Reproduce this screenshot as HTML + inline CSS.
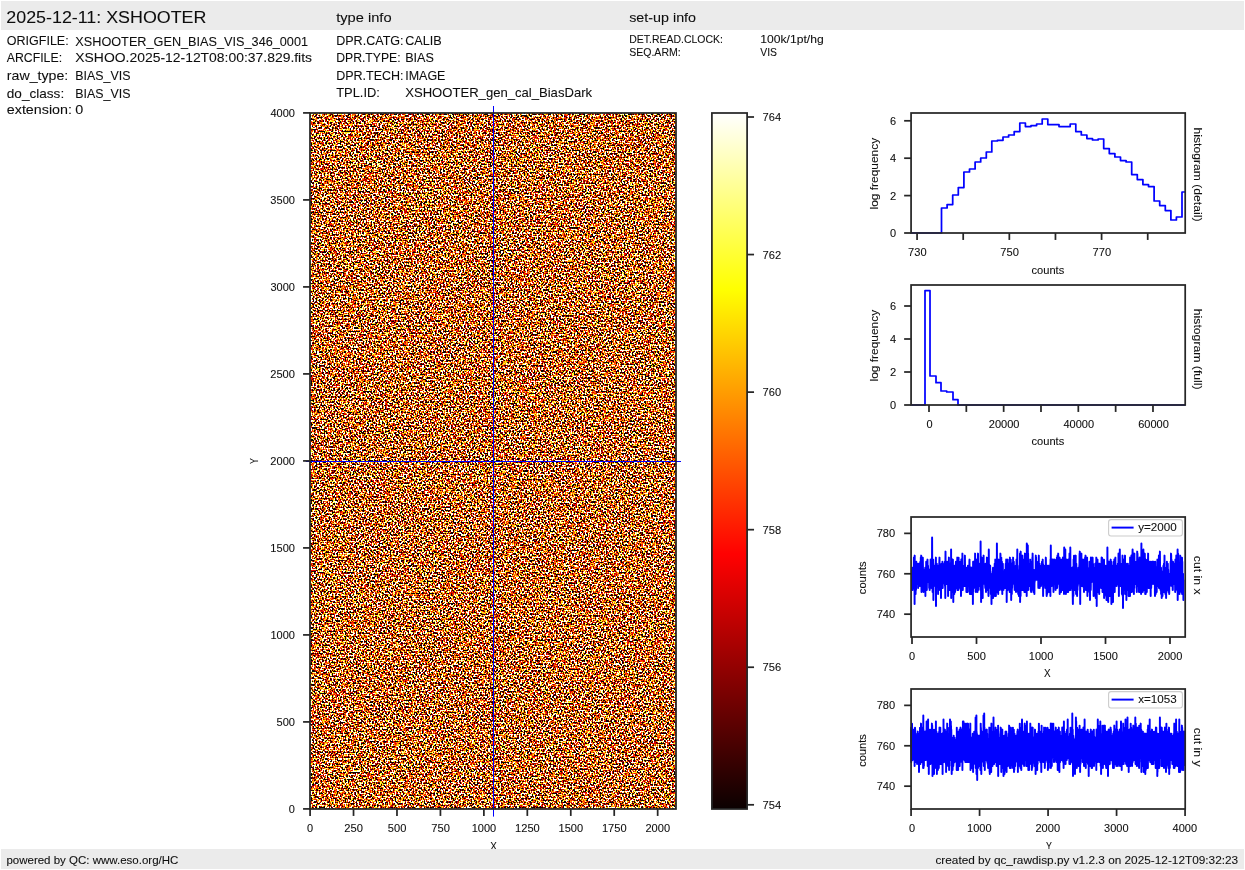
<!DOCTYPE html>
<html><head><meta charset="utf-8"><title>XSHOOTER BIAS_VIS</title>
<style>
html,body{margin:0;padding:0;background:#fff;}
body{width:1245px;height:870px;overflow:hidden;}
svg{display:block;font-family:"Liberation Sans",sans-serif;will-change:transform;opacity:0.9999;}
text{white-space:pre;stroke:#1a1a1a;stroke-width:0.08px;}
</style></head><body>
<svg width="1245" height="870" viewBox="0 0 1245 870">
<defs>
<linearGradient id="hot" x1="0" y1="1" x2="0" y2="0">
<stop offset="0" stop-color="rgb(11,0,0)"/><stop offset="0.365079" stop-color="rgb(255,0,0)"/><stop offset="0.746032" stop-color="rgb(255,255,0)"/><stop offset="1" stop-color="rgb(255,255,255)"/>
</linearGradient>
<filter id="noise" x="0" y="0" width="100%" height="100%" filterUnits="objectBoundingBox" color-interpolation-filters="sRGB">
<feTurbulence type="fractalNoise" baseFrequency="0.62 0.58" numOctaves="1" seed="7"/>
<feColorMatrix type="matrix" values="1 0 0 0 0  1 0 0 0 0  1 0 0 0 0  0 0 0 0 1"/>
<feComponentTransfer>
<feFuncR type="discrete" tableValues="0.042 0.042 0.042 0.042 0.042 0.042 0.042 0.042 0.042 0.042 0.042 0.042 0.042 0.042 0.042 0.042 0.042 0.042 0.042 0.042 0.042 0.042 0.042 0.042 0.042 0.042 0.042 0.042 0.042 0.042 0.042 0.042 0.042 0.042 0.042 0.042 0.042 0.042 0.042 0.042 0.042 0.042 0.042 0.042 0.042 0.042 0.042 0.042 0.042 0.042 0.042 0.042 0.042 0.042 0.042 0.042 0.042 0.042 0.042 0.042 0.042 0.042 0.042 0.042 0.042 0.042 0.042 0.042 0.042 0.042 0.042 0.042 0.042 0.042 0.042 0.042 0.042 0.042 0.042 0.042 0.042 0.042 0.042 0.042 0.042 0.042 0.042 0.042 0.042 0.042 0.042 0.042 0.042 0.042 0.042 0.042 0.042 0.042 0.057 0.057 0.057 0.057 0.057 0.057 0.317 0.317 0.317 0.317 0.317 0.317 0.576 0.576 0.576 0.576 0.576 0.576 0.835 0.835 0.835 0.835 0.835 0.835 1 1 1 1 1 1 1 1 1 1 1 1 1 1 1 1 1 1 1 1 1 1 1 1 1 1 1 1 1 1 1 1 1 1 1 1 1 1 1 1 1 1 1 1 1 1 1 1 1 1 1 1 1 1 1 1 1 1 1 1 1 1 1 1 1 1 1 1 1 1 1 1 1 1 1 1 1 1 1 1 1 1 1 1 1 1 1 1 1 1 1 1 1 1 1 1 1 1 1 1 1 1 1 1 1 1 1 1 1 1 1 1 1 1 1 1 1 1 1 1 1 1 1 1 1 1 1 1 1 1 1 1 1 1"/>
<feFuncG type="discrete" tableValues="0 0 0 0 0 0 0 0 0 0 0 0 0 0 0 0 0 0 0 0 0 0 0 0 0 0 0 0 0 0 0 0 0 0 0 0 0 0 0 0 0 0 0 0 0 0 0 0 0 0 0 0 0 0 0 0 0 0 0 0 0 0 0 0 0 0 0 0 0 0 0 0 0 0 0 0 0 0 0 0 0 0 0 0 0 0 0 0 0 0 0 0 0 0 0 0 0 0 0 0 0 0 0 0 0 0 0 0 0 0 0 0 0 0 0 0 0 0 0 0 0 0 0.095 0.095 0.095 0.095 0.095 0.354 0.354 0.354 0.354 0.354 0.614 0.614 0.614 0.614 0.614 0.873 0.873 0.873 0.873 0.873 1 1 1 1 1 1 1 1 1 1 1 1 1 1 1 1 1 1 1 1 1 1 1 1 1 1 1 1 1 1 1 1 1 1 1 1 1 1 1 1 1 1 1 1 1 1 1 1 1 1 1 1 1 1 1 1 1 1 1 1 1 1 1 1 1 1 1 1 1 1 1 1 1 1 1 1 1 1 1 1 1 1 1 1 1 1 1 1 1 1 1 1 1 1 1 1 1 1 1 1 1 1 1 1 1 1 1 1 1 1 1 1 1 1"/>
<feFuncB type="discrete" tableValues="0 0 0 0 0 0 0 0 0 0 0 0 0 0 0 0 0 0 0 0 0 0 0 0 0 0 0 0 0 0 0 0 0 0 0 0 0 0 0 0 0 0 0 0 0 0 0 0 0 0 0 0 0 0 0 0 0 0 0 0 0 0 0 0 0 0 0 0 0 0 0 0 0 0 0 0 0 0 0 0 0 0 0 0 0 0 0 0 0 0 0 0 0 0 0 0 0 0 0 0 0 0 0 0 0 0 0 0 0 0 0 0 0 0 0 0 0 0 0 0 0 0 0 0 0 0 0 0 0 0 0 0 0 0 0 0 0 0 0 0 0 0 0.198 0.198 0.198 0.198 0.588 0.588 0.588 0.588 0.588 0.588 0.977 0.977 0.977 0.977 0.977 1 1 1 1 1 1 1 1 1 1 1 1 1 1 1 1 1 1 1 1 1 1 1 1 1 1 1 1 1 1 1 1 1 1 1 1 1 1 1 1 1 1 1 1 1 1 1 1 1 1 1 1 1 1 1 1 1 1 1 1 1 1 1 1 1 1 1 1 1 1 1 1 1 1 1 1 1 1 1 1 1 1 1 1 1 1 1 1 1 1 1 1 1 1 1 1 1 1 1"/>
</feComponentTransfer>
</filter>
</defs>
<rect x="0" y="0" width="1245" height="870" fill="#fff"/>
<rect x="1" y="1" width="1243" height="29" fill="#ebebeb"/>
<text x="6.30" y="23.00" font-size="17.33" textLength="200.12" lengthAdjust="spacingAndGlyphs" fill="#0d0d0d">2025-12-11: XSHOOTER</text>
<text x="336.20" y="22.40" font-size="13.00" textLength="55.38" lengthAdjust="spacingAndGlyphs" fill="#0d0d0d">type info</text>
<text x="629.20" y="22.40" font-size="13.00" textLength="66.88" lengthAdjust="spacingAndGlyphs" fill="#0d0d0d">set-up info</text>
<text x="6.80" y="44.60" font-size="13.00" textLength="61.88" lengthAdjust="spacingAndGlyphs" fill="#0d0d0d">ORIGFILE:</text>
<text x="75.30" y="46.00" font-size="13.00" textLength="232.75" lengthAdjust="spacingAndGlyphs" fill="#0d0d0d">XSHOOTER_GEN_BIAS_VIS_346_0001</text>
<text x="6.80" y="61.60" font-size="13.00" textLength="55.25" lengthAdjust="spacingAndGlyphs" fill="#0d0d0d">ARCFILE:</text>
<text x="75.30" y="61.60" font-size="13.00" textLength="236.75" lengthAdjust="spacingAndGlyphs" fill="#0d0d0d">XSHOO.2025-12-12T08:00:37.829.fits</text>
<text x="6.80" y="79.60" font-size="13.00" textLength="61.50" lengthAdjust="spacingAndGlyphs" fill="#0d0d0d">raw_type:</text>
<text x="75.30" y="80.40" font-size="13.00" textLength="55.12" lengthAdjust="spacingAndGlyphs" fill="#0d0d0d">BIAS_VIS</text>
<text x="6.80" y="97.60" font-size="13.00" textLength="57.38" lengthAdjust="spacingAndGlyphs" fill="#0d0d0d">do_class:</text>
<text x="75.30" y="97.60" font-size="13.00" textLength="55.12" lengthAdjust="spacingAndGlyphs" fill="#0d0d0d">BIAS_VIS</text>
<text x="6.80" y="113.60" font-size="13.00" textLength="65.12" lengthAdjust="spacingAndGlyphs" fill="#0d0d0d">extension:</text>
<text x="75.30" y="113.60" font-size="13.00" textLength="8.00" lengthAdjust="spacingAndGlyphs" fill="#0d0d0d">0</text>
<text x="336.20" y="44.60" font-size="13.00" textLength="67.38" lengthAdjust="spacingAndGlyphs" fill="#0d0d0d">DPR.CATG:</text>
<text x="405.20" y="44.60" font-size="13.00" textLength="36.50" lengthAdjust="spacingAndGlyphs" fill="#0d0d0d">CALIB</text>
<text x="336.20" y="61.60" font-size="13.00" textLength="64.38" lengthAdjust="spacingAndGlyphs" fill="#0d0d0d">DPR.TYPE:</text>
<text x="405.20" y="61.60" font-size="13.00" textLength="28.75" lengthAdjust="spacingAndGlyphs" fill="#0d0d0d">BIAS</text>
<text x="336.20" y="79.60" font-size="13.00" textLength="67.38" lengthAdjust="spacingAndGlyphs" fill="#0d0d0d">DPR.TECH:</text>
<text x="405.20" y="79.60" font-size="13.00" textLength="40.25" lengthAdjust="spacingAndGlyphs" fill="#0d0d0d">IMAGE</text>
<text x="336.20" y="97.20" font-size="13.00" textLength="43.75" lengthAdjust="spacingAndGlyphs" fill="#0d0d0d">TPL.ID:</text>
<text x="405.20" y="97.20" font-size="13.00" textLength="186.88" lengthAdjust="spacingAndGlyphs" fill="#0d0d0d">XSHOOTER_gen_cal_BiasDark</text>
<text x="629.20" y="43.00" font-size="10.83" textLength="93.75" lengthAdjust="spacingAndGlyphs" fill="#0d0d0d">DET.READ.CLOCK:</text>
<text x="629.20" y="56.00" font-size="10.83" textLength="51.50" lengthAdjust="spacingAndGlyphs" fill="#0d0d0d">SEQ.ARM:</text>
<text x="760.30" y="43.00" font-size="10.83" textLength="63.38" lengthAdjust="spacingAndGlyphs" fill="#0d0d0d">100k/1pt/hg</text>
<text x="760.30" y="56.00" font-size="10.83" textLength="16.75" lengthAdjust="spacingAndGlyphs" fill="#0d0d0d">VIS</text>
<rect x="310.0" y="113.0" width="366.0" height="696.0" fill="#bc713b"/>
<rect x="310.0" y="113.0" width="366.0" height="696.0" filter="url(#noise)"/>
<line x1="493.50" y1="106.00" x2="493.50" y2="816.60" stroke="#0000ff" stroke-width="1.00"/>
<line x1="305.80" y1="461.50" x2="681.00" y2="461.50" stroke="#0000ff" stroke-width="1.00"/>
<line x1="310.09" y1="809.00" x2="310.09" y2="815.94" stroke="#262626" stroke-width="1.74"/>
<text x="307.12" y="832.00" font-size="10.11" textLength="6.12" lengthAdjust="spacingAndGlyphs" fill="#0d0d0d">0</text>
<line x1="353.53" y1="809.00" x2="353.53" y2="815.94" stroke="#262626" stroke-width="1.74"/>
<text x="344.32" y="832.00" font-size="10.11" textLength="18.62" lengthAdjust="spacingAndGlyphs" fill="#0d0d0d">250</text>
<line x1="396.98" y1="809.00" x2="396.98" y2="815.94" stroke="#262626" stroke-width="1.74"/>
<text x="387.83" y="832.00" font-size="10.11" textLength="18.50" lengthAdjust="spacingAndGlyphs" fill="#0d0d0d">500</text>
<line x1="440.43" y1="809.00" x2="440.43" y2="815.94" stroke="#262626" stroke-width="1.74"/>
<text x="431.22" y="832.00" font-size="10.11" textLength="18.62" lengthAdjust="spacingAndGlyphs" fill="#0d0d0d">750</text>
<line x1="483.88" y1="809.00" x2="483.88" y2="815.94" stroke="#262626" stroke-width="1.74"/>
<text x="471.73" y="832.00" font-size="10.11" textLength="24.50" lengthAdjust="spacingAndGlyphs" fill="#0d0d0d">1000</text>
<line x1="527.32" y1="809.00" x2="527.32" y2="815.94" stroke="#262626" stroke-width="1.74"/>
<text x="515.05" y="832.00" font-size="10.11" textLength="24.75" lengthAdjust="spacingAndGlyphs" fill="#0d0d0d">1250</text>
<line x1="570.77" y1="809.00" x2="570.77" y2="815.94" stroke="#262626" stroke-width="1.74"/>
<text x="558.56" y="832.00" font-size="10.11" textLength="24.62" lengthAdjust="spacingAndGlyphs" fill="#0d0d0d">1500</text>
<line x1="614.22" y1="809.00" x2="614.22" y2="815.94" stroke="#262626" stroke-width="1.74"/>
<text x="601.94" y="832.00" font-size="10.11" textLength="24.75" lengthAdjust="spacingAndGlyphs" fill="#0d0d0d">1750</text>
<line x1="657.67" y1="809.00" x2="657.67" y2="815.94" stroke="#262626" stroke-width="1.74"/>
<text x="645.45" y="832.00" font-size="10.11" textLength="24.62" lengthAdjust="spacingAndGlyphs" fill="#0d0d0d">2000</text>
<line x1="303.06" y1="808.91" x2="310.00" y2="808.91" stroke="#262626" stroke-width="1.74"/>
<text x="288.88" y="812.71" font-size="10.11" textLength="6.12" lengthAdjust="spacingAndGlyphs" fill="#0d0d0d">0</text>
<line x1="303.06" y1="721.91" x2="310.00" y2="721.91" stroke="#262626" stroke-width="1.74"/>
<text x="276.50" y="725.71" font-size="10.11" textLength="18.50" lengthAdjust="spacingAndGlyphs" fill="#0d0d0d">500</text>
<line x1="303.06" y1="634.91" x2="310.00" y2="634.91" stroke="#262626" stroke-width="1.74"/>
<text x="270.50" y="638.71" font-size="10.11" textLength="24.50" lengthAdjust="spacingAndGlyphs" fill="#0d0d0d">1000</text>
<line x1="303.06" y1="547.91" x2="310.00" y2="547.91" stroke="#262626" stroke-width="1.74"/>
<text x="270.38" y="551.71" font-size="10.11" textLength="24.62" lengthAdjust="spacingAndGlyphs" fill="#0d0d0d">1500</text>
<line x1="303.06" y1="460.91" x2="310.00" y2="460.91" stroke="#262626" stroke-width="1.74"/>
<text x="270.38" y="464.71" font-size="10.11" textLength="24.62" lengthAdjust="spacingAndGlyphs" fill="#0d0d0d">2000</text>
<line x1="303.06" y1="373.91" x2="310.00" y2="373.91" stroke="#262626" stroke-width="1.74"/>
<text x="270.25" y="377.71" font-size="10.11" textLength="24.75" lengthAdjust="spacingAndGlyphs" fill="#0d0d0d">2500</text>
<line x1="303.06" y1="286.91" x2="310.00" y2="286.91" stroke="#262626" stroke-width="1.74"/>
<text x="270.50" y="290.71" font-size="10.11" textLength="24.50" lengthAdjust="spacingAndGlyphs" fill="#0d0d0d">3000</text>
<line x1="303.06" y1="199.91" x2="310.00" y2="199.91" stroke="#262626" stroke-width="1.74"/>
<text x="270.38" y="203.71" font-size="10.11" textLength="24.62" lengthAdjust="spacingAndGlyphs" fill="#0d0d0d">3500</text>
<line x1="303.06" y1="112.91" x2="310.00" y2="112.91" stroke="#262626" stroke-width="1.74"/>
<text x="270.50" y="116.71" font-size="10.11" textLength="24.50" lengthAdjust="spacingAndGlyphs" fill="#0d0d0d">4000</text>
<rect x="310.00" y="113.00" width="366.00" height="696.00" fill="none" stroke="#262626" stroke-width="1.74"/>
<text x="490.29" y="849.80" font-size="10.11" textLength="6.62" lengthAdjust="spacingAndGlyphs" fill="#0d0d0d">X</text>
<text x="-2.94" y="0.00" font-size="10.11" textLength="5.88" lengthAdjust="spacingAndGlyphs" fill="#0d0d0d" transform="translate(257.60 461.00) rotate(-90)">Y</text>
<rect x="711.90" y="113.00" width="35.20" height="696.00" fill="url(#hot)"/>
<line x1="747.10" y1="804.80" x2="754.04" y2="804.80" stroke="#262626" stroke-width="1.74"/>
<text x="762.60" y="808.80" font-size="10.11" textLength="18.62" lengthAdjust="spacingAndGlyphs" fill="#0d0d0d">754</text>
<line x1="747.10" y1="667.24" x2="754.04" y2="667.24" stroke="#262626" stroke-width="1.74"/>
<text x="762.60" y="671.24" font-size="10.11" textLength="18.62" lengthAdjust="spacingAndGlyphs" fill="#0d0d0d">756</text>
<line x1="747.10" y1="529.68" x2="754.04" y2="529.68" stroke="#262626" stroke-width="1.74"/>
<text x="762.60" y="533.68" font-size="10.11" textLength="18.62" lengthAdjust="spacingAndGlyphs" fill="#0d0d0d">758</text>
<line x1="747.10" y1="392.12" x2="754.04" y2="392.12" stroke="#262626" stroke-width="1.74"/>
<text x="762.60" y="396.12" font-size="10.11" textLength="18.50" lengthAdjust="spacingAndGlyphs" fill="#0d0d0d">760</text>
<line x1="747.10" y1="254.56" x2="754.04" y2="254.56" stroke="#262626" stroke-width="1.74"/>
<text x="762.60" y="258.56" font-size="10.11" textLength="18.62" lengthAdjust="spacingAndGlyphs" fill="#0d0d0d">762</text>
<line x1="747.10" y1="117.00" x2="754.04" y2="117.00" stroke="#262626" stroke-width="1.74"/>
<text x="762.60" y="121.00" font-size="10.11" textLength="18.50" lengthAdjust="spacingAndGlyphs" fill="#0d0d0d">764</text>
<rect x="711.90" y="113.00" width="35.20" height="696.00" fill="none" stroke="#262626" stroke-width="1.74"/>
<path d="M911.1 233.0 H941.5V208.0 H947.1V204.6 H952.7V195.0 H958.3V187.6 H963.9V172.0 H969.5V169.0 H975.1V162.0 H980.7V158.0 H986.3V152.0 H991.8V141.0 H997.4V140.3 H1003.0V137.0 H1008.6V135.0 H1014.2V131.6 H1019.8V123.0 H1025.4V126.6 H1031.0V125.6 H1036.6V124.0 H1042.2V119.0 H1047.8V124.6 H1053.4V124.6 H1059.0V126.6 H1064.6V126.6 H1070.2V124.0 H1075.8V131.6 H1081.3V135.0 H1086.9V138.6 H1092.5V140.0 H1098.1V139.0 H1103.7V148.6 H1109.3V153.6 H1114.9V157.0 H1120.5V160.6 H1126.1V162.0 H1131.7V174.6 H1137.3V179.6 H1142.9V184.6 H1148.5V186.6 H1154.1V201.0 H1159.7V205.6 H1165.3V210.6 H1170.9V220.0 H1176.4V217.0 H1182.0V192.0 H1185.2" fill="none" stroke="#0000ff" stroke-width="1.74" stroke-linejoin="round"/>
<line x1="917.07" y1="233.00" x2="917.07" y2="239.94" stroke="#262626" stroke-width="1.74"/>
<text x="908.12" y="256.20" font-size="10.11" textLength="18.50" lengthAdjust="spacingAndGlyphs" fill="#0d0d0d">730</text>
<line x1="963.20" y1="233.00" x2="963.20" y2="239.94" stroke="#262626" stroke-width="1.74"/>
<line x1="1009.33" y1="233.00" x2="1009.33" y2="239.94" stroke="#262626" stroke-width="1.74"/>
<text x="1000.31" y="256.20" font-size="10.11" textLength="18.62" lengthAdjust="spacingAndGlyphs" fill="#0d0d0d">750</text>
<line x1="1055.46" y1="233.00" x2="1055.46" y2="239.94" stroke="#262626" stroke-width="1.74"/>
<line x1="1101.59" y1="233.00" x2="1101.59" y2="239.94" stroke="#262626" stroke-width="1.74"/>
<text x="1092.57" y="256.20" font-size="10.11" textLength="18.62" lengthAdjust="spacingAndGlyphs" fill="#0d0d0d">770</text>
<line x1="1147.72" y1="233.00" x2="1147.72" y2="239.94" stroke="#262626" stroke-width="1.74"/>
<line x1="904.13" y1="233.00" x2="911.07" y2="233.00" stroke="#262626" stroke-width="1.74"/>
<text x="890.08" y="237.00" font-size="10.11" textLength="6.12" lengthAdjust="spacingAndGlyphs" fill="#0d0d0d">0</text>
<line x1="904.13" y1="195.60" x2="911.07" y2="195.60" stroke="#262626" stroke-width="1.74"/>
<text x="889.95" y="199.60" font-size="10.11" textLength="6.25" lengthAdjust="spacingAndGlyphs" fill="#0d0d0d">2</text>
<line x1="904.13" y1="158.20" x2="911.07" y2="158.20" stroke="#262626" stroke-width="1.74"/>
<text x="890.08" y="162.20" font-size="10.11" textLength="6.12" lengthAdjust="spacingAndGlyphs" fill="#0d0d0d">4</text>
<line x1="904.13" y1="120.80" x2="911.07" y2="120.80" stroke="#262626" stroke-width="1.74"/>
<text x="890.08" y="124.80" font-size="10.11" textLength="6.12" lengthAdjust="spacingAndGlyphs" fill="#0d0d0d">6</text>
<rect x="911.07" y="113.00" width="274.13" height="120.00" fill="none" stroke="#262626" stroke-width="1.74"/>
<text x="1031.53" y="274.00" font-size="10.11" textLength="32.75" lengthAdjust="spacingAndGlyphs" fill="#0d0d0d">counts</text>
<text x="-35.81" y="0.00" font-size="10.83" textLength="71.62" lengthAdjust="spacingAndGlyphs" fill="#0d0d0d" transform="translate(878.20 173.70) rotate(-90)">log frequency</text>
<text x="-46.94" y="0.00" font-size="10.83" textLength="93.88" lengthAdjust="spacingAndGlyphs" fill="#0d0d0d" transform="translate(1194.40 174.50) rotate(90)">histogram (detail)</text>
<path d="M911.1 405.0 H925.0V290.6 H930.0V376.0 H936.0V382.7 H941.0V391.0 H946.7V392.0 H953.0V399.7 H958.0V405.0 H1185.2" fill="none" stroke="#0000ff" stroke-width="1.74" stroke-linejoin="round"/>
<line x1="929.00" y1="405.00" x2="929.00" y2="411.94" stroke="#262626" stroke-width="1.74"/>
<text x="926.44" y="428.00" font-size="10.11" textLength="6.12" lengthAdjust="spacingAndGlyphs" fill="#0d0d0d">0</text>
<line x1="966.33" y1="405.00" x2="966.33" y2="411.94" stroke="#262626" stroke-width="1.74"/>
<line x1="1003.66" y1="405.00" x2="1003.66" y2="411.94" stroke="#262626" stroke-width="1.74"/>
<text x="988.78" y="428.00" font-size="10.11" textLength="30.75" lengthAdjust="spacingAndGlyphs" fill="#0d0d0d">20000</text>
<line x1="1040.99" y1="405.00" x2="1040.99" y2="411.94" stroke="#262626" stroke-width="1.74"/>
<line x1="1078.32" y1="405.00" x2="1078.32" y2="411.94" stroke="#262626" stroke-width="1.74"/>
<text x="1063.51" y="428.00" font-size="10.11" textLength="30.62" lengthAdjust="spacingAndGlyphs" fill="#0d0d0d">40000</text>
<line x1="1115.65" y1="405.00" x2="1115.65" y2="411.94" stroke="#262626" stroke-width="1.74"/>
<line x1="1152.98" y1="405.00" x2="1152.98" y2="411.94" stroke="#262626" stroke-width="1.74"/>
<text x="1138.17" y="428.00" font-size="10.11" textLength="30.62" lengthAdjust="spacingAndGlyphs" fill="#0d0d0d">60000</text>
<line x1="904.13" y1="405.00" x2="911.07" y2="405.00" stroke="#262626" stroke-width="1.74"/>
<text x="890.08" y="409.00" font-size="10.11" textLength="6.12" lengthAdjust="spacingAndGlyphs" fill="#0d0d0d">0</text>
<line x1="904.13" y1="372.00" x2="911.07" y2="372.00" stroke="#262626" stroke-width="1.74"/>
<text x="889.95" y="376.00" font-size="10.11" textLength="6.25" lengthAdjust="spacingAndGlyphs" fill="#0d0d0d">2</text>
<line x1="904.13" y1="339.00" x2="911.07" y2="339.00" stroke="#262626" stroke-width="1.74"/>
<text x="890.08" y="343.00" font-size="10.11" textLength="6.12" lengthAdjust="spacingAndGlyphs" fill="#0d0d0d">4</text>
<line x1="904.13" y1="306.00" x2="911.07" y2="306.00" stroke="#262626" stroke-width="1.74"/>
<text x="890.08" y="310.00" font-size="10.11" textLength="6.12" lengthAdjust="spacingAndGlyphs" fill="#0d0d0d">6</text>
<rect x="911.07" y="285.00" width="274.13" height="120.00" fill="none" stroke="#262626" stroke-width="1.74"/>
<text x="1031.53" y="445.40" font-size="10.11" textLength="32.75" lengthAdjust="spacingAndGlyphs" fill="#0d0d0d">counts</text>
<text x="-35.81" y="0.00" font-size="10.83" textLength="71.62" lengthAdjust="spacingAndGlyphs" fill="#0d0d0d" transform="translate(878.20 345.70) rotate(-90)">log frequency</text>
<text x="-40.38" y="0.00" font-size="10.83" textLength="80.75" lengthAdjust="spacingAndGlyphs" fill="#0d0d0d" transform="translate(1194.40 349.20) rotate(90)">histogram (full)</text>
<path d="M912.0 589.9L912.1 583.9L912.3 567.7L912.4 573.8L912.5 589.9L912.6 577.8L912.8 575.8L912.9 585.9L913.0 569.7L913.2 587.9L913.3 579.8L913.4 575.8L913.5 577.8L913.7 573.8L913.8 569.7L913.9 557.6L914.1 581.9L914.2 571.8L914.3 571.8L914.5 581.9L914.6 604.1L914.7 555.6L914.8 581.9L915.0 581.9L915.1 563.7L915.2 573.8L915.4 577.8L915.5 567.7L915.6 594.0L915.7 569.7L915.9 579.8L916.0 589.9L916.1 571.8L916.3 561.7L916.4 583.9L916.5 571.8L916.6 581.9L916.8 569.7L916.9 569.7L917.0 583.9L917.2 565.7L917.3 571.8L917.4 571.8L917.5 565.7L917.7 577.8L917.8 567.7L917.9 563.7L918.1 587.9L918.2 565.7L918.3 579.8L918.5 575.8L918.6 585.9L918.7 571.8L918.8 581.9L919.0 563.7L919.1 581.9L919.2 573.8L919.4 577.8L919.5 573.8L919.6 583.9L919.7 585.9L919.9 569.7L920.0 569.7L920.1 573.8L920.3 561.7L920.4 583.9L920.5 565.7L920.6 585.9L920.8 557.6L920.9 571.8L921.0 573.8L921.2 555.6L921.3 567.7L921.4 567.7L921.5 592.0L921.7 579.8L921.8 589.9L921.9 583.9L922.1 583.9L922.2 565.7L922.3 587.9L922.4 581.9L922.6 575.8L922.7 565.7L922.8 557.6L923.0 569.7L923.1 583.9L923.2 575.8L923.4 569.7L923.5 592.0L923.6 571.8L923.7 579.8L923.9 573.8L924.0 571.8L924.1 571.8L924.3 575.8L924.4 573.8L924.5 583.9L924.6 575.8L924.8 587.9L924.9 575.8L925.0 575.8L925.2 567.7L925.3 579.8L925.4 596.0L925.5 575.8L925.7 583.9L925.8 569.7L925.9 579.8L926.1 579.8L926.2 561.7L926.3 579.8L926.4 579.8L926.6 579.8L926.7 575.8L926.8 589.9L927.0 575.8L927.1 561.7L927.2 573.8L927.4 569.7L927.5 559.6L927.6 565.7L927.7 569.7L927.9 567.7L928.0 565.7L928.1 581.9L928.3 575.8L928.4 579.8L928.5 581.9L928.6 573.8L928.8 579.8L928.9 573.8L929.0 573.8L929.2 587.9L929.3 577.8L929.4 579.8L929.5 569.7L929.7 589.9L929.8 585.9L929.9 575.8L930.1 577.8L930.2 571.8L930.3 579.8L930.4 583.9L930.6 559.6L930.7 583.9L930.8 585.9L931.0 581.9L931.1 579.8L931.2 583.9L931.4 575.8L931.5 559.6L931.6 587.9L931.7 577.8L931.9 571.8L932.0 563.7L932.1 537.4L932.3 585.9L932.4 575.8L932.5 563.7L932.6 592.0L932.8 573.8L932.9 585.9L933.0 567.7L933.2 559.6L933.3 575.8L933.4 600.0L933.5 589.9L933.7 577.8L933.8 565.7L933.9 583.9L934.1 571.8L934.2 577.8L934.3 581.9L934.4 569.7L934.6 581.9L934.7 579.8L934.8 567.7L935.0 575.8L935.1 567.7L935.2 575.8L935.3 585.9L935.5 577.8L935.6 563.7L935.7 573.8L935.9 557.6L936.0 606.1L936.1 579.8L936.3 567.7L936.4 571.8L936.5 573.8L936.6 571.8L936.8 563.7L936.9 571.8L937.0 575.8L937.2 573.8L937.3 571.8L937.4 579.8L937.5 571.8L937.7 573.8L937.8 567.7L937.9 575.8L938.1 594.0L938.2 575.8L938.3 565.7L938.4 571.8L938.6 571.8L938.7 579.8L938.8 579.8L939.0 569.7L939.1 589.9L939.2 563.7L939.3 563.7L939.5 557.6L939.6 587.9L939.7 587.9L939.9 563.7L940.0 577.8L940.1 581.9L940.3 579.8L940.4 571.8L940.5 585.9L940.6 575.8L940.8 571.8L940.9 569.7L941.0 598.0L941.2 567.7L941.3 577.8L941.4 577.8L941.5 573.8L941.7 581.9L941.8 563.7L941.9 583.9L942.1 575.8L942.2 585.9L942.3 573.8L942.4 561.7L942.6 563.7L942.7 587.9L942.8 571.8L943.0 563.7L943.1 583.9L943.2 577.8L943.3 569.7L943.5 569.7L943.6 577.8L943.7 571.8L943.9 571.8L944.0 579.8L944.1 571.8L944.2 573.8L944.4 571.8L944.5 575.8L944.6 579.8L944.8 577.8L944.9 561.7L945.0 585.9L945.2 585.9L945.3 598.0L945.4 565.7L945.5 551.6L945.7 583.9L945.8 581.9L945.9 583.9L946.1 573.8L946.2 575.8L946.3 565.7L946.4 583.9L946.6 563.7L946.7 577.8L946.8 567.7L947.0 567.7L947.1 561.7L947.2 575.8L947.3 573.8L947.5 573.8L947.6 583.9L947.7 575.8L947.9 561.7L948.0 561.7L948.1 596.0L948.2 571.8L948.4 579.8L948.5 587.9L948.6 587.9L948.8 567.7L948.9 557.6L949.0 575.8L949.2 579.8L949.3 575.8L949.4 565.7L949.5 569.7L949.7 589.9L949.8 583.9L949.9 563.7L950.1 575.8L950.2 571.8L950.3 567.7L950.4 571.8L950.6 569.7L950.7 575.8L950.8 583.9L951.0 585.9L951.1 549.5L951.2 598.0L951.3 571.8L951.5 563.7L951.6 583.9L951.7 592.0L951.9 577.8L952.0 579.8L952.1 577.8L952.2 577.8L952.4 559.6L952.5 587.9L952.6 559.6L952.8 592.0L952.9 559.6L953.0 579.8L953.2 569.7L953.3 602.1L953.4 577.8L953.5 571.8L953.7 571.8L953.8 567.7L953.9 585.9L954.1 577.8L954.2 573.8L954.3 594.0L954.4 565.7L954.6 577.8L954.7 583.9L954.8 583.9L955.0 571.8L955.1 592.0L955.2 583.9L955.3 581.9L955.5 581.9L955.6 569.7L955.7 573.8L955.9 561.7L956.0 569.7L956.1 581.9L956.2 579.8L956.4 587.9L956.5 583.9L956.6 573.8L956.8 569.7L956.9 581.9L957.0 579.8L957.1 567.7L957.3 557.6L957.4 589.9L957.5 589.9L957.7 567.7L957.8 575.8L957.9 577.8L958.1 571.8L958.2 567.7L958.3 589.9L958.4 557.6L958.6 557.6L958.7 577.8L958.8 577.8L959.0 581.9L959.1 573.8L959.2 583.9L959.3 575.8L959.5 561.7L959.6 575.8L959.7 565.7L959.9 585.9L960.0 563.7L960.1 587.9L960.2 583.9L960.4 569.7L960.5 581.9L960.6 587.9L960.8 589.9L960.9 567.7L961.0 596.0L961.1 592.0L961.3 559.6L961.4 567.7L961.5 579.8L961.7 583.9L961.8 563.7L961.9 567.7L962.1 571.8L962.2 575.8L962.3 575.8L962.4 553.6L962.6 575.8L962.7 589.9L962.8 589.9L963.0 573.8L963.1 569.7L963.2 571.8L963.3 569.7L963.5 581.9L963.6 579.8L963.7 581.9L963.9 579.8L964.0 581.9L964.1 565.7L964.2 585.9L964.4 583.9L964.5 569.7L964.6 577.8L964.8 579.8L964.9 555.6L965.0 563.7L965.1 583.9L965.3 585.9L965.4 575.8L965.5 573.8L965.7 579.8L965.8 573.8L965.9 571.8L966.1 567.7L966.2 583.9L966.3 571.8L966.4 592.0L966.6 589.9L966.7 592.0L966.8 587.9L967.0 567.7L967.1 579.8L967.2 575.8L967.3 577.8L967.5 583.9L967.6 592.0L967.7 585.9L967.9 565.7L968.0 579.8L968.1 577.8L968.2 581.9L968.4 569.7L968.5 569.7L968.6 579.8L968.8 575.8L968.9 579.8L969.0 573.8L969.1 573.8L969.3 573.8L969.4 561.7L969.5 559.6L969.7 592.0L969.8 579.8L969.9 594.0L970.0 579.8L970.2 567.7L970.3 571.8L970.4 573.8L970.6 589.9L970.7 567.7L970.8 573.8L971.0 581.9L971.1 567.7L971.2 594.0L971.3 585.9L971.5 567.7L971.6 592.0L971.7 587.9L971.9 575.8L972.0 569.7L972.1 573.8L972.2 594.0L972.4 581.9L972.5 569.7L972.6 579.8L972.8 583.9L972.9 604.1L973.0 581.9L973.1 561.7L973.3 592.0L973.4 573.8L973.5 561.7L973.7 569.7L973.8 581.9L973.9 571.8L974.0 587.9L974.2 575.8L974.3 581.9L974.4 563.7L974.6 563.7L974.7 567.7L974.8 579.8L975.0 567.7L975.1 553.6L975.2 579.8L975.3 575.8L975.5 585.9L975.6 587.9L975.7 569.7L975.9 592.0L976.0 573.8L976.1 587.9L976.2 571.8L976.4 569.7L976.5 559.6L976.6 579.8L976.8 579.8L976.9 577.8L977.0 569.7L977.1 567.7L977.3 587.9L977.4 579.8L977.5 592.0L977.7 583.9L977.8 569.7L977.9 559.6L978.0 553.6L978.2 589.9L978.3 577.8L978.4 563.7L978.6 575.8L978.7 579.8L978.8 567.7L979.0 563.7L979.1 585.9L979.2 575.8L979.3 585.9L979.5 585.9L979.6 575.8L979.7 581.9L979.9 567.7L980.0 579.8L980.1 585.9L980.2 571.8L980.4 581.9L980.5 589.9L980.6 541.5L980.8 585.9L980.9 587.9L981.0 575.8L981.1 602.1L981.3 567.7L981.4 589.9L981.5 594.0L981.7 557.6L981.8 575.8L981.9 561.7L982.0 563.7L982.2 569.7L982.3 594.0L982.4 571.8L982.6 589.9L982.7 598.0L982.8 565.7L983.0 581.9L983.1 569.7L983.2 575.8L983.3 567.7L983.5 571.8L983.6 555.6L983.7 575.8L983.9 565.7L984.0 565.7L984.1 573.8L984.2 575.8L984.4 577.8L984.5 571.8L984.6 583.9L984.8 577.8L984.9 571.8L985.0 581.9L985.1 583.9L985.3 587.9L985.4 567.7L985.5 563.7L985.7 565.7L985.8 569.7L985.9 573.8L986.0 592.0L986.2 563.7L986.3 575.8L986.4 571.8L986.6 587.9L986.7 569.7L986.8 585.9L986.9 557.6L987.1 569.7L987.2 575.8L987.3 571.8L987.5 583.9L987.6 575.8L987.7 589.9L987.9 581.9L988.0 581.9L988.1 585.9L988.2 577.8L988.4 592.0L988.5 596.0L988.6 579.8L988.8 549.5L988.9 569.7L989.0 577.8L989.1 583.9L989.3 587.9L989.4 577.8L989.5 571.8L989.7 565.7L989.8 577.8L989.9 565.7L990.0 567.7L990.2 565.7L990.3 579.8L990.4 577.8L990.6 585.9L990.7 573.8L990.8 594.0L990.9 577.8L991.1 585.9L991.2 575.8L991.3 585.9L991.5 604.1L991.6 577.8L991.7 577.8L991.9 575.8L992.0 587.9L992.1 575.8L992.2 581.9L992.4 589.9L992.5 577.8L992.6 571.8L992.8 581.9L992.9 569.7L993.0 567.7L993.1 598.0L993.3 583.9L993.4 581.9L993.5 573.8L993.7 575.8L993.8 573.8L993.9 589.9L994.0 581.9L994.2 585.9L994.3 569.7L994.4 571.8L994.6 581.9L994.7 563.7L994.8 587.9L994.9 596.0L995.1 579.8L995.2 571.8L995.3 559.6L995.5 575.8L995.6 587.9L995.7 573.8L995.9 596.0L996.0 565.7L996.1 579.8L996.2 587.9L996.4 585.9L996.5 565.7L996.6 561.7L996.8 585.9L996.9 543.5L997.0 563.7L997.1 579.8L997.3 592.0L997.4 585.9L997.5 577.8L997.7 583.9L997.8 585.9L997.9 581.9L998.0 563.7L998.2 594.0L998.3 561.7L998.4 577.8L998.6 569.7L998.7 575.8L998.8 559.6L998.9 585.9L999.1 581.9L999.2 575.8L999.3 575.8L999.5 579.8L999.6 581.9L999.7 589.9L999.8 575.8L1000.0 565.7L1000.1 563.7L1000.2 577.8L1000.4 553.6L1000.5 555.6L1000.6 579.8L1000.8 587.9L1000.9 565.7L1001.0 559.6L1001.1 571.8L1001.3 557.6L1001.4 575.8L1001.5 575.8L1001.7 589.9L1001.8 579.8L1001.9 561.7L1002.0 587.9L1002.2 587.9L1002.3 594.0L1002.4 575.8L1002.6 573.8L1002.7 575.8L1002.8 563.7L1002.9 571.8L1003.1 571.8L1003.2 573.8L1003.3 575.8L1003.5 589.9L1003.6 587.9L1003.7 571.8L1003.8 583.9L1004.0 577.8L1004.1 571.8L1004.2 573.8L1004.4 583.9L1004.5 581.9L1004.6 587.9L1004.8 571.8L1004.9 569.7L1005.0 587.9L1005.1 581.9L1005.3 585.9L1005.4 573.8L1005.5 581.9L1005.7 563.7L1005.8 581.9L1005.9 571.8L1006.0 571.8L1006.2 559.6L1006.3 569.7L1006.4 559.6L1006.6 573.8L1006.7 602.1L1006.8 579.8L1006.9 569.7L1007.1 579.8L1007.2 571.8L1007.3 587.9L1007.5 571.8L1007.6 579.8L1007.7 559.6L1007.8 589.9L1008.0 579.8L1008.1 567.7L1008.2 579.8L1008.4 577.8L1008.5 579.8L1008.6 587.9L1008.8 579.8L1008.9 563.7L1009.0 567.7L1009.1 581.9L1009.3 571.8L1009.4 567.7L1009.5 567.7L1009.7 592.0L1009.8 585.9L1009.9 557.6L1010.0 581.9L1010.2 567.7L1010.3 571.8L1010.4 563.7L1010.6 589.9L1010.7 559.6L1010.8 563.7L1010.9 583.9L1011.1 569.7L1011.2 600.0L1011.3 563.7L1011.5 577.8L1011.6 569.7L1011.7 567.7L1011.8 594.0L1012.0 563.7L1012.1 587.9L1012.2 585.9L1012.4 577.8L1012.5 581.9L1012.6 571.8L1012.7 583.9L1012.9 573.8L1013.0 567.7L1013.1 557.6L1013.3 577.8L1013.4 581.9L1013.5 573.8L1013.7 571.8L1013.8 561.7L1013.9 573.8L1014.0 577.8L1014.2 581.9L1014.3 569.7L1014.4 571.8L1014.6 589.9L1014.7 581.9L1014.8 585.9L1014.9 575.8L1015.1 579.8L1015.2 585.9L1015.3 575.8L1015.5 571.8L1015.6 579.8L1015.7 565.7L1015.8 587.9L1016.0 592.0L1016.1 569.7L1016.2 573.8L1016.4 569.7L1016.5 559.6L1016.6 575.8L1016.7 567.7L1016.9 571.8L1017.0 575.8L1017.1 575.8L1017.3 549.5L1017.4 579.8L1017.5 577.8L1017.7 575.8L1017.8 571.8L1017.9 592.0L1018.0 571.8L1018.2 594.0L1018.3 579.8L1018.4 577.8L1018.6 573.8L1018.7 573.8L1018.8 573.8L1018.9 596.0L1019.1 579.8L1019.2 569.7L1019.3 577.8L1019.5 565.7L1019.6 575.8L1019.7 573.8L1019.8 571.8L1020.0 553.6L1020.1 602.1L1020.2 587.9L1020.4 589.9L1020.5 583.9L1020.6 596.0L1020.7 551.6L1020.9 585.9L1021.0 575.8L1021.1 563.7L1021.3 575.8L1021.4 583.9L1021.5 581.9L1021.6 577.8L1021.8 581.9L1021.9 577.8L1022.0 577.8L1022.2 589.9L1022.3 563.7L1022.4 555.6L1022.6 573.8L1022.7 589.9L1022.8 561.7L1022.9 579.8L1023.1 579.8L1023.2 581.9L1023.3 561.7L1023.5 571.8L1023.6 581.9L1023.7 579.8L1023.8 577.8L1024.0 579.8L1024.1 571.8L1024.2 559.6L1024.4 592.0L1024.5 565.7L1024.6 565.7L1024.7 583.9L1024.9 553.6L1025.0 563.7L1025.1 569.7L1025.3 587.9L1025.4 577.8L1025.5 569.7L1025.6 573.8L1025.8 592.0L1025.9 567.7L1026.0 577.8L1026.2 583.9L1026.3 579.8L1026.4 587.9L1026.6 579.8L1026.7 596.0L1026.8 543.5L1026.9 587.9L1027.1 579.8L1027.2 581.9L1027.3 577.8L1027.5 579.8L1027.6 563.7L1027.7 585.9L1027.8 545.5L1028.0 579.8L1028.1 553.6L1028.2 579.8L1028.4 589.9L1028.5 565.7L1028.6 585.9L1028.7 569.7L1028.9 563.7L1029.0 583.9L1029.1 579.8L1029.3 573.8L1029.4 563.7L1029.5 565.7L1029.6 575.8L1029.8 573.8L1029.9 567.7L1030.0 585.9L1030.2 559.6L1030.3 563.7L1030.4 583.9L1030.6 571.8L1030.7 569.7L1030.8 571.8L1030.9 589.9L1031.1 592.0L1031.2 583.9L1031.3 587.9L1031.5 575.8L1031.6 569.7L1031.7 573.8L1031.8 561.7L1032.0 575.8L1032.1 577.8L1032.2 587.9L1032.4 557.6L1032.5 571.8L1032.6 553.6L1032.7 559.6L1032.9 589.9L1033.0 573.8L1033.1 575.8L1033.3 569.7L1033.4 592.0L1033.5 571.8L1033.6 573.8L1033.8 579.8L1033.9 587.9L1034.0 571.8L1034.2 592.0L1034.3 579.8L1034.4 594.0L1034.5 581.9L1034.7 581.9L1034.8 573.8L1034.9 571.8L1035.1 569.7L1035.2 577.8L1035.3 569.7L1035.5 571.8L1035.6 575.8L1035.7 567.7L1035.8 555.6L1036.0 575.8L1036.1 557.6L1036.2 571.8L1036.4 579.8L1036.5 575.8L1036.6 571.8L1036.7 579.8L1036.9 561.7L1037.0 579.8L1037.1 571.8L1037.3 563.7L1037.4 565.7L1037.5 571.8L1037.6 569.7L1037.8 569.7L1037.9 573.8L1038.0 577.8L1038.2 563.7L1038.3 585.9L1038.4 587.9L1038.5 581.9L1038.7 583.9L1038.8 555.6L1038.9 575.8L1039.1 563.7L1039.2 573.8L1039.3 583.9L1039.5 563.7L1039.6 563.7L1039.7 587.9L1039.8 567.7L1040.0 573.8L1040.1 585.9L1040.2 579.8L1040.4 569.7L1040.5 585.9L1040.6 573.8L1040.7 575.8L1040.9 575.8L1041.0 585.9L1041.1 565.7L1041.3 575.8L1041.4 571.8L1041.5 571.8L1041.6 579.8L1041.8 569.7L1041.9 577.8L1042.0 561.7L1042.2 577.8L1042.3 583.9L1042.4 577.8L1042.5 579.8L1042.7 559.6L1042.8 581.9L1042.9 563.7L1043.1 596.0L1043.2 587.9L1043.3 581.9L1043.5 569.7L1043.6 573.8L1043.7 577.8L1043.8 577.8L1044.0 565.7L1044.1 583.9L1044.2 567.7L1044.4 579.8L1044.5 571.8L1044.6 567.7L1044.7 577.8L1044.9 583.9L1045.0 583.9L1045.1 583.9L1045.3 587.9L1045.4 577.8L1045.5 571.8L1045.6 579.8L1045.8 557.6L1045.9 559.6L1046.0 567.7L1046.2 567.7L1046.3 581.9L1046.4 569.7L1046.5 592.0L1046.7 596.0L1046.8 589.9L1046.9 579.8L1047.1 569.7L1047.2 594.0L1047.3 579.8L1047.5 573.8L1047.6 565.7L1047.7 573.8L1047.8 583.9L1048.0 589.9L1048.1 575.8L1048.2 567.7L1048.4 565.7L1048.5 573.8L1048.6 585.9L1048.7 589.9L1048.9 592.0L1049.0 581.9L1049.1 575.8L1049.3 585.9L1049.4 573.8L1049.5 581.9L1049.6 567.7L1049.8 575.8L1049.9 567.7L1050.0 581.9L1050.2 573.8L1050.3 563.7L1050.4 596.0L1050.5 559.6L1050.7 573.8L1050.8 545.5L1050.9 581.9L1051.1 575.8L1051.2 571.8L1051.3 573.8L1051.4 573.8L1051.6 563.7L1051.7 585.9L1051.8 569.7L1052.0 577.8L1052.1 561.7L1052.2 559.6L1052.4 577.8L1052.5 579.8L1052.6 561.7L1052.7 559.6L1052.9 567.7L1053.0 561.7L1053.1 559.6L1053.3 575.8L1053.4 579.8L1053.5 592.0L1053.6 577.8L1053.8 583.9L1053.9 569.7L1054.0 573.8L1054.2 559.6L1054.3 571.8L1054.4 581.9L1054.5 579.8L1054.7 575.8L1054.8 575.8L1054.9 559.6L1055.1 571.8L1055.2 579.8L1055.3 581.9L1055.4 573.8L1055.6 589.9L1055.7 577.8L1055.8 563.7L1056.0 561.7L1056.1 573.8L1056.2 575.8L1056.4 579.8L1056.5 573.8L1056.6 577.8L1056.7 571.8L1056.9 557.6L1057.0 569.7L1057.1 587.9L1057.3 585.9L1057.4 571.8L1057.5 555.6L1057.6 573.8L1057.8 565.7L1057.9 581.9L1058.0 583.9L1058.2 553.6L1058.3 563.7L1058.4 577.8L1058.5 567.7L1058.7 571.8L1058.8 567.7L1058.9 573.8L1059.1 571.8L1059.2 559.6L1059.3 577.8L1059.4 569.7L1059.6 557.6L1059.7 594.0L1059.8 581.9L1060.0 579.8L1060.1 573.8L1060.2 577.8L1060.3 559.6L1060.5 583.9L1060.6 581.9L1060.7 589.9L1060.9 585.9L1061.0 573.8L1061.1 592.0L1061.3 559.6L1061.4 567.7L1061.5 589.9L1061.6 567.7L1061.8 587.9L1061.9 575.8L1062.0 583.9L1062.2 585.9L1062.3 575.8L1062.4 563.7L1062.5 589.9L1062.7 583.9L1062.8 575.8L1062.9 557.6L1063.1 579.8L1063.2 563.7L1063.3 575.8L1063.4 577.8L1063.6 567.7L1063.7 583.9L1063.8 575.8L1064.0 594.0L1064.1 575.8L1064.2 547.5L1064.3 589.9L1064.5 587.9L1064.6 573.8L1064.7 559.6L1064.9 573.8L1065.0 557.6L1065.1 579.8L1065.3 549.5L1065.4 583.9L1065.5 567.7L1065.6 579.8L1065.8 565.7L1065.9 594.0L1066.0 581.9L1066.2 561.7L1066.3 567.7L1066.4 575.8L1066.5 579.8L1066.7 559.6L1066.8 583.9L1066.9 583.9L1067.1 592.0L1067.2 571.8L1067.3 561.7L1067.4 587.9L1067.6 567.7L1067.7 567.7L1067.8 583.9L1068.0 575.8L1068.1 573.8L1068.2 592.0L1068.3 559.6L1068.5 587.9L1068.6 585.9L1068.7 569.7L1068.9 575.8L1069.0 567.7L1069.1 571.8L1069.3 589.9L1069.4 577.8L1069.5 553.6L1069.6 581.9L1069.8 585.9L1069.9 563.7L1070.0 589.9L1070.2 577.8L1070.3 547.5L1070.4 563.7L1070.5 587.9L1070.7 589.9L1070.8 575.8L1070.9 571.8L1071.1 567.7L1071.2 583.9L1071.3 577.8L1071.4 577.8L1071.6 581.9L1071.7 571.8L1071.8 575.8L1072.0 577.8L1072.1 567.7L1072.2 581.9L1072.3 573.8L1072.5 567.7L1072.6 579.8L1072.7 594.0L1072.9 604.1L1073.0 567.7L1073.1 567.7L1073.2 569.7L1073.4 596.0L1073.5 581.9L1073.6 559.6L1073.8 573.8L1073.9 577.8L1074.0 555.6L1074.2 555.6L1074.3 581.9L1074.4 569.7L1074.5 567.7L1074.7 565.7L1074.8 561.7L1074.9 569.7L1075.1 589.9L1075.2 581.9L1075.3 583.9L1075.4 571.8L1075.6 575.8L1075.7 555.6L1075.8 583.9L1076.0 587.9L1076.1 594.0L1076.2 583.9L1076.3 563.7L1076.5 573.8L1076.6 581.9L1076.7 573.8L1076.9 571.8L1077.0 579.8L1077.1 596.0L1077.2 569.7L1077.4 573.8L1077.5 589.9L1077.6 575.8L1077.8 585.9L1077.9 577.8L1078.0 569.7L1078.2 573.8L1078.3 579.8L1078.4 567.7L1078.5 581.9L1078.7 571.8L1078.8 581.9L1078.9 571.8L1079.1 573.8L1079.2 573.8L1079.3 565.7L1079.4 567.7L1079.6 553.6L1079.7 583.9L1079.8 551.6L1080.0 571.8L1080.1 585.9L1080.2 604.1L1080.3 583.9L1080.5 577.8L1080.6 571.8L1080.7 563.7L1080.9 565.7L1081.0 561.7L1081.1 563.7L1081.2 563.7L1081.4 553.6L1081.5 569.7L1081.6 585.9L1081.8 573.8L1081.9 577.8L1082.0 571.8L1082.2 581.9L1082.3 561.7L1082.4 581.9L1082.5 577.8L1082.7 585.9L1082.8 561.7L1082.9 563.7L1083.1 559.6L1083.2 583.9L1083.3 579.8L1083.4 561.7L1083.6 563.7L1083.7 587.9L1083.8 577.8L1084.0 592.0L1084.1 565.7L1084.2 565.7L1084.3 559.6L1084.5 567.7L1084.6 577.8L1084.7 579.8L1084.9 571.8L1085.0 577.8L1085.1 557.6L1085.2 577.8L1085.4 577.8L1085.5 555.6L1085.6 581.9L1085.8 579.8L1085.9 589.9L1086.0 561.7L1086.2 575.8L1086.3 577.8L1086.4 563.7L1086.5 561.7L1086.7 583.9L1086.8 587.9L1086.9 563.7L1087.1 557.6L1087.2 575.8L1087.3 569.7L1087.4 596.0L1087.6 575.8L1087.7 589.9L1087.8 587.9L1088.0 592.0L1088.1 575.8L1088.2 573.8L1088.3 577.8L1088.5 569.7L1088.6 589.9L1088.7 583.9L1088.9 585.9L1089.0 575.8L1089.1 567.7L1089.2 585.9L1089.4 561.7L1089.5 579.8L1089.6 583.9L1089.8 581.9L1089.9 567.7L1090.0 600.0L1090.1 577.8L1090.3 581.9L1090.4 575.8L1090.5 579.8L1090.7 589.9L1090.8 585.9L1090.9 557.6L1091.1 573.8L1091.2 561.7L1091.3 557.6L1091.4 573.8L1091.6 561.7L1091.7 577.8L1091.8 581.9L1092.0 567.7L1092.1 579.8L1092.2 581.9L1092.3 575.8L1092.5 577.8L1092.6 557.6L1092.7 563.7L1092.9 569.7L1093.0 563.7L1093.1 581.9L1093.2 581.9L1093.4 579.8L1093.5 573.8L1093.6 596.0L1093.8 587.9L1093.9 581.9L1094.0 587.9L1094.1 581.9L1094.3 587.9L1094.4 581.9L1094.5 577.8L1094.7 575.8L1094.8 567.7L1094.9 581.9L1095.1 579.8L1095.2 563.7L1095.3 596.0L1095.4 575.8L1095.6 587.9L1095.7 598.0L1095.8 563.7L1096.0 571.8L1096.1 577.8L1096.2 567.7L1096.3 557.6L1096.5 573.8L1096.6 577.8L1096.7 606.1L1096.9 559.6L1097.0 567.7L1097.1 587.9L1097.2 577.8L1097.4 583.9L1097.5 559.6L1097.6 581.9L1097.8 585.9L1097.9 563.7L1098.0 581.9L1098.1 587.9L1098.3 592.0L1098.4 585.9L1098.5 577.8L1098.7 581.9L1098.8 571.8L1098.9 563.7L1099.0 585.9L1099.2 594.0L1099.3 567.7L1099.4 571.8L1099.6 563.7L1099.7 587.9L1099.8 571.8L1100.0 581.9L1100.1 585.9L1100.2 579.8L1100.3 565.7L1100.5 567.7L1100.6 565.7L1100.7 583.9L1100.9 577.8L1101.0 585.9L1101.1 583.9L1101.2 565.7L1101.4 587.9L1101.5 561.7L1101.6 557.6L1101.8 577.8L1101.9 573.8L1102.0 557.6L1102.1 569.7L1102.3 567.7L1102.4 569.7L1102.5 592.0L1102.7 567.7L1102.8 571.8L1102.9 579.8L1103.0 592.0L1103.2 579.8L1103.3 573.8L1103.4 579.8L1103.6 573.8L1103.7 577.8L1103.8 571.8L1104.0 559.6L1104.1 598.0L1104.2 573.8L1104.3 567.7L1104.5 596.0L1104.6 577.8L1104.7 567.7L1104.9 571.8L1105.0 579.8L1105.1 579.8L1105.2 594.0L1105.4 575.8L1105.5 565.7L1105.6 565.7L1105.8 569.7L1105.9 575.8L1106.0 583.9L1106.1 581.9L1106.3 585.9L1106.4 579.8L1106.5 600.0L1106.7 577.8L1106.8 567.7L1106.9 579.8L1107.0 565.7L1107.2 573.8L1107.3 567.7L1107.4 547.5L1107.6 587.9L1107.7 577.8L1107.8 585.9L1108.0 587.9L1108.1 569.7L1108.2 602.1L1108.3 573.8L1108.5 561.7L1108.6 577.8L1108.7 571.8L1108.9 587.9L1109.0 569.7L1109.1 567.7L1109.2 573.8L1109.4 561.7L1109.5 573.8L1109.6 573.8L1109.8 596.0L1109.9 565.7L1110.0 579.8L1110.1 571.8L1110.3 575.8L1110.4 585.9L1110.5 575.8L1110.7 559.6L1110.8 571.8L1110.9 587.9L1111.0 575.8L1111.2 561.7L1111.3 596.0L1111.4 604.1L1111.6 565.7L1111.7 573.8L1111.8 569.7L1112.0 579.8L1112.1 573.8L1112.2 585.9L1112.3 587.9L1112.5 573.8L1112.6 565.7L1112.7 575.8L1112.9 596.0L1113.0 602.1L1113.1 567.7L1113.2 579.8L1113.4 583.9L1113.5 581.9L1113.6 561.7L1113.8 575.8L1113.9 587.9L1114.0 585.9L1114.1 592.0L1114.3 559.6L1114.4 577.8L1114.5 577.8L1114.7 592.0L1114.8 581.9L1114.9 567.7L1115.0 565.7L1115.2 577.8L1115.3 581.9L1115.4 557.6L1115.6 579.8L1115.7 581.9L1115.8 585.9L1115.9 575.8L1116.1 565.7L1116.2 575.8L1116.3 565.7L1116.5 579.8L1116.6 571.8L1116.7 585.9L1116.9 577.8L1117.0 581.9L1117.1 581.9L1117.2 567.7L1117.4 583.9L1117.5 575.8L1117.6 579.8L1117.8 563.7L1117.9 583.9L1118.0 579.8L1118.1 569.7L1118.3 581.9L1118.4 569.7L1118.5 553.6L1118.7 579.8L1118.8 575.8L1118.9 596.0L1119.0 567.7L1119.2 579.8L1119.3 573.8L1119.4 583.9L1119.6 571.8L1119.7 575.8L1119.8 549.5L1119.9 559.6L1120.1 573.8L1120.2 585.9L1120.3 581.9L1120.5 575.8L1120.6 567.7L1120.7 563.7L1120.9 563.7L1121.0 567.7L1121.1 577.8L1121.2 573.8L1121.4 581.9L1121.5 573.8L1121.6 579.8L1121.8 573.8L1121.9 594.0L1122.0 589.9L1122.1 571.8L1122.3 577.8L1122.4 583.9L1122.5 555.6L1122.7 596.0L1122.8 559.6L1122.9 565.7L1123.0 608.1L1123.2 563.7L1123.3 569.7L1123.4 583.9L1123.6 571.8L1123.7 559.6L1123.8 589.9L1123.9 581.9L1124.1 587.9L1124.2 563.7L1124.3 587.9L1124.5 587.9L1124.6 589.9L1124.7 565.7L1124.8 583.9L1125.0 555.6L1125.1 594.0L1125.2 577.8L1125.4 587.9L1125.5 585.9L1125.6 585.9L1125.8 573.8L1125.9 583.9L1126.0 579.8L1126.1 563.7L1126.3 573.8L1126.4 600.0L1126.5 581.9L1126.7 573.8L1126.8 581.9L1126.9 589.9L1127.0 587.9L1127.2 579.8L1127.3 573.8L1127.4 577.8L1127.6 583.9L1127.7 585.9L1127.8 581.9L1127.9 563.7L1128.1 589.9L1128.2 589.9L1128.3 589.9L1128.5 573.8L1128.6 596.0L1128.7 581.9L1128.8 581.9L1129.0 577.8L1129.1 577.8L1129.2 565.7L1129.4 581.9L1129.5 585.9L1129.6 567.7L1129.8 583.9L1129.9 587.9L1130.0 596.0L1130.1 557.6L1130.3 571.8L1130.4 571.8L1130.5 589.9L1130.7 565.7L1130.8 592.0L1130.9 571.8L1131.0 565.7L1131.2 577.8L1131.3 583.9L1131.4 555.6L1131.6 592.0L1131.7 581.9L1131.8 573.8L1131.9 571.8L1132.1 583.9L1132.2 581.9L1132.3 577.8L1132.5 553.6L1132.6 549.5L1132.7 587.9L1132.8 565.7L1133.0 577.8L1133.1 581.9L1133.2 577.8L1133.4 592.0L1133.5 569.7L1133.6 569.7L1133.8 581.9L1133.9 594.0L1134.0 569.7L1134.1 553.6L1134.3 587.9L1134.4 553.6L1134.5 573.8L1134.7 583.9L1134.8 567.7L1134.9 567.7L1135.0 579.8L1135.2 573.8L1135.3 583.9L1135.4 573.8L1135.6 583.9L1135.7 579.8L1135.8 567.7L1135.9 567.7L1136.1 571.8L1136.2 561.7L1136.3 567.7L1136.5 573.8L1136.6 571.8L1136.7 587.9L1136.8 592.0L1137.0 583.9L1137.1 567.7L1137.2 551.6L1137.4 583.9L1137.5 553.6L1137.6 565.7L1137.8 585.9L1137.9 575.8L1138.0 581.9L1138.1 569.7L1138.3 579.8L1138.4 579.8L1138.5 573.8L1138.7 581.9L1138.8 567.7L1138.9 573.8L1139.0 592.0L1139.2 573.8L1139.3 577.8L1139.4 561.7L1139.6 557.6L1139.7 592.0L1139.8 567.7L1139.9 573.8L1140.1 575.8L1140.2 587.9L1140.3 563.7L1140.5 571.8L1140.6 571.8L1140.7 557.6L1140.8 587.9L1141.0 579.8L1141.1 594.0L1141.2 581.9L1141.4 543.5L1141.5 579.8L1141.6 565.7L1141.7 563.7L1141.9 575.8L1142.0 565.7L1142.1 583.9L1142.3 589.9L1142.4 583.9L1142.5 587.9L1142.7 587.9L1142.8 592.0L1142.9 589.9L1143.0 587.9L1143.2 573.8L1143.3 581.9L1143.4 549.5L1143.6 571.8L1143.7 559.6L1143.8 569.7L1143.9 563.7L1144.1 559.6L1144.2 579.8L1144.3 583.9L1144.5 589.9L1144.6 557.6L1144.7 583.9L1144.8 553.6L1145.0 569.7L1145.1 567.7L1145.2 594.0L1145.4 561.7L1145.5 589.9L1145.6 567.7L1145.7 594.0L1145.9 559.6L1146.0 592.0L1146.1 585.9L1146.3 577.8L1146.4 585.9L1146.5 587.9L1146.7 579.8L1146.8 592.0L1146.9 573.8L1147.0 569.7L1147.2 575.8L1147.3 573.8L1147.4 583.9L1147.6 577.8L1147.7 571.8L1147.8 559.6L1147.9 575.8L1148.1 553.6L1148.2 577.8L1148.3 573.8L1148.5 569.7L1148.6 587.9L1148.7 565.7L1148.8 565.7L1149.0 587.9L1149.1 571.8L1149.2 577.8L1149.4 585.9L1149.5 583.9L1149.6 587.9L1149.7 561.7L1149.9 565.7L1150.0 569.7L1150.1 585.9L1150.3 569.7L1150.4 581.9L1150.5 575.8L1150.7 596.0L1150.8 561.7L1150.9 579.8L1151.0 571.8L1151.2 587.9L1151.3 583.9L1151.4 567.7L1151.6 569.7L1151.7 573.8L1151.8 579.8L1151.9 571.8L1152.1 561.7L1152.2 565.7L1152.3 567.7L1152.5 577.8L1152.6 577.8L1152.7 561.7L1152.8 581.9L1153.0 575.8L1153.1 583.9L1153.2 577.8L1153.4 583.9L1153.5 563.7L1153.6 561.7L1153.7 579.8L1153.9 567.7L1154.0 567.7L1154.1 563.7L1154.3 569.7L1154.4 583.9L1154.5 571.8L1154.6 581.9L1154.8 575.8L1154.9 592.0L1155.0 596.0L1155.2 561.7L1155.3 577.8L1155.4 575.8L1155.6 571.8L1155.7 594.0L1155.8 571.8L1155.9 569.7L1156.1 592.0L1156.2 567.7L1156.3 575.8L1156.5 575.8L1156.6 581.9L1156.7 592.0L1156.8 583.9L1157.0 583.9L1157.1 567.7L1157.2 573.8L1157.4 559.6L1157.5 585.9L1157.6 567.7L1157.7 571.8L1157.9 577.8L1158.0 569.7L1158.1 585.9L1158.3 569.7L1158.4 581.9L1158.5 575.8L1158.6 571.8L1158.8 583.9L1158.9 555.6L1159.0 587.9L1159.2 563.7L1159.3 555.6L1159.4 567.7L1159.6 577.8L1159.7 567.7L1159.8 571.8L1159.9 551.6L1160.1 571.8L1160.2 587.9L1160.3 575.8L1160.5 589.9L1160.6 575.8L1160.7 587.9L1160.8 575.8L1161.0 567.7L1161.1 594.0L1161.2 579.8L1161.4 592.0L1161.5 579.8L1161.6 579.8L1161.7 598.0L1161.9 579.8L1162.0 571.8L1162.1 577.8L1162.3 587.9L1162.4 577.8L1162.5 596.0L1162.6 585.9L1162.8 577.8L1162.9 585.9L1163.0 573.8L1163.2 587.9L1163.3 567.7L1163.4 565.7L1163.5 565.7L1163.7 569.7L1163.8 573.8L1163.9 563.7L1164.1 587.9L1164.2 592.0L1164.3 579.8L1164.5 555.6L1164.6 577.8L1164.7 573.8L1164.8 581.9L1165.0 573.8L1165.1 567.7L1165.2 573.8L1165.4 594.0L1165.5 579.8L1165.6 577.8L1165.7 587.9L1165.9 594.0L1166.0 569.7L1166.1 598.0L1166.3 581.9L1166.4 573.8L1166.5 567.7L1166.6 581.9L1166.8 589.9L1166.9 561.7L1167.0 571.8L1167.2 567.7L1167.3 571.8L1167.4 569.7L1167.5 589.9L1167.7 587.9L1167.8 563.7L1167.9 581.9L1168.1 573.8L1168.2 569.7L1168.3 575.8L1168.5 592.0L1168.6 573.8L1168.7 577.8L1168.8 581.9L1169.0 577.8L1169.1 573.8L1169.2 594.0L1169.4 579.8L1169.5 583.9L1169.6 575.8L1169.7 585.9L1169.9 577.8L1170.0 577.8L1170.1 585.9L1170.3 583.9L1170.4 573.8L1170.5 573.8L1170.6 561.7L1170.8 571.8L1170.9 573.8L1171.0 553.6L1171.2 555.6L1171.3 575.8L1171.4 575.8L1171.5 559.6L1171.7 579.8L1171.8 565.7L1171.9 585.9L1172.1 585.9L1172.2 581.9L1172.3 575.8L1172.5 579.8L1172.6 583.9L1172.7 589.9L1172.8 589.9L1173.0 561.7L1173.1 567.7L1173.2 567.7L1173.4 571.8L1173.5 573.8L1173.6 577.8L1173.7 571.8L1173.9 577.8L1174.0 563.7L1174.1 583.9L1174.3 577.8L1174.4 567.7L1174.5 573.8L1174.6 569.7L1174.8 569.7L1174.9 579.8L1175.0 577.8L1175.2 592.0L1175.3 579.8L1175.4 559.6L1175.5 589.9L1175.7 561.7L1175.8 563.7L1175.9 567.7L1176.1 585.9L1176.2 565.7L1176.3 555.6L1176.5 579.8L1176.6 587.9L1176.7 585.9L1176.8 581.9L1177.0 581.9L1177.1 589.9L1177.2 583.9L1177.4 579.8L1177.5 569.7L1177.6 549.5L1177.7 600.0L1177.9 561.7L1178.0 563.7L1178.1 553.6L1178.3 575.8L1178.4 579.8L1178.5 583.9L1178.6 581.9L1178.8 581.9L1178.9 581.9L1179.0 577.8L1179.2 589.9L1179.3 587.9L1179.4 577.8L1179.5 594.0L1179.7 565.7L1179.8 569.7L1179.9 581.9L1180.1 567.7L1180.2 555.6L1180.3 567.7L1180.4 581.9L1180.6 573.8L1180.7 569.7L1180.8 565.7L1181.0 577.8L1181.1 581.9L1181.2 577.8L1181.4 592.0L1181.5 563.7L1181.6 571.8L1181.7 575.8L1181.9 573.8L1182.0 557.6L1182.1 594.0L1182.3 561.7L1182.4 581.9L1182.5 575.8L1182.6 577.8L1182.8 579.8L1182.9 579.8L1183.0 573.8L1183.2 581.9L1183.3 583.9L1183.4 600.0L1183.5 579.8" fill="none" stroke="#0000ff" stroke-width="1.95" stroke-linejoin="round"/>
<line x1="912.00" y1="637.00" x2="912.00" y2="643.94" stroke="#262626" stroke-width="1.74"/>
<text x="909.04" y="660.20" font-size="10.11" textLength="6.12" lengthAdjust="spacingAndGlyphs" fill="#0d0d0d">0</text>
<line x1="976.50" y1="637.00" x2="976.50" y2="643.94" stroke="#262626" stroke-width="1.74"/>
<text x="967.35" y="660.20" font-size="10.11" textLength="18.50" lengthAdjust="spacingAndGlyphs" fill="#0d0d0d">500</text>
<line x1="1041.00" y1="637.00" x2="1041.00" y2="643.94" stroke="#262626" stroke-width="1.74"/>
<text x="1028.85" y="660.20" font-size="10.11" textLength="24.50" lengthAdjust="spacingAndGlyphs" fill="#0d0d0d">1000</text>
<line x1="1105.50" y1="637.00" x2="1105.50" y2="643.94" stroke="#262626" stroke-width="1.74"/>
<text x="1093.29" y="660.20" font-size="10.11" textLength="24.62" lengthAdjust="spacingAndGlyphs" fill="#0d0d0d">1500</text>
<line x1="1170.00" y1="637.00" x2="1170.00" y2="643.94" stroke="#262626" stroke-width="1.74"/>
<text x="1157.79" y="660.20" font-size="10.11" textLength="24.62" lengthAdjust="spacingAndGlyphs" fill="#0d0d0d">2000</text>
<line x1="904.13" y1="614.17" x2="911.07" y2="614.17" stroke="#262626" stroke-width="1.74"/>
<text x="876.70" y="618.27" font-size="10.11" textLength="18.50" lengthAdjust="spacingAndGlyphs" fill="#0d0d0d">740</text>
<line x1="904.13" y1="573.77" x2="911.07" y2="573.77" stroke="#262626" stroke-width="1.74"/>
<text x="876.70" y="577.87" font-size="10.11" textLength="18.50" lengthAdjust="spacingAndGlyphs" fill="#0d0d0d">760</text>
<line x1="904.13" y1="533.37" x2="911.07" y2="533.37" stroke="#262626" stroke-width="1.74"/>
<text x="876.70" y="537.47" font-size="10.11" textLength="18.50" lengthAdjust="spacingAndGlyphs" fill="#0d0d0d">780</text>
<rect x="911.07" y="517.00" width="274.13" height="120.00" fill="none" stroke="#262626" stroke-width="1.74"/>
<text x="1044.09" y="677.40" font-size="10.11" textLength="6.62" lengthAdjust="spacingAndGlyphs" fill="#0d0d0d">X</text>
<text x="-16.38" y="0.00" font-size="10.11" textLength="32.75" lengthAdjust="spacingAndGlyphs" fill="#0d0d0d" transform="translate(866.00 577.80) rotate(-90)">counts</text>
<text x="-19.38" y="0.00" font-size="10.83" textLength="38.75" lengthAdjust="spacingAndGlyphs" fill="#0d0d0d" transform="translate(1194.00 575.20) rotate(90)">cut in x</text>
<rect x="1108.6" y="519.6" width="73.8" height="16.4" rx="2.4" fill="#fff" fill-opacity="0.8" stroke="#ccc" stroke-width="1.1"/>
<line x1="1111.60" y1="527.60" x2="1133.60" y2="527.60" stroke="#0000ff" stroke-width="1.95"/>
<text x="1138.20" y="531.00" font-size="10.11" textLength="38.50" lengthAdjust="spacingAndGlyphs" fill="#0d0d0d">y=2000</text>
<path d="M911.1 731.6L911.1 747.8L911.2 727.6L911.3 761.9L911.3 745.8L911.4 751.8L911.5 739.7L911.5 757.9L911.6 735.7L911.7 747.8L911.8 733.7L911.8 747.8L911.9 749.8L912.0 739.7L912.0 723.6L912.1 751.8L912.2 727.6L912.2 733.7L912.3 757.9L912.4 745.8L912.4 741.7L912.5 731.6L912.6 743.8L912.6 759.9L912.7 747.8L912.8 747.8L912.9 747.8L912.9 729.6L913.0 751.8L913.1 755.9L913.1 747.8L913.2 743.8L913.3 731.6L913.3 745.8L913.4 753.9L913.5 733.7L913.5 747.8L913.6 743.8L913.7 747.8L913.7 755.9L913.8 743.8L913.9 739.7L913.9 755.9L914.0 749.8L914.1 751.8L914.2 757.9L914.2 755.9L914.3 729.6L914.4 735.7L914.4 751.8L914.5 741.7L914.6 766.0L914.6 733.7L914.7 747.8L914.8 737.7L914.8 753.9L914.9 751.8L915.0 751.8L915.0 727.6L915.1 749.8L915.2 747.8L915.2 729.6L915.3 733.7L915.4 751.8L915.5 753.9L915.5 739.7L915.6 759.9L915.7 751.8L915.7 735.7L915.8 733.7L915.9 755.9L915.9 761.9L916.0 739.7L916.1 745.8L916.1 755.9L916.2 747.8L916.3 761.9L916.3 741.7L916.4 747.8L916.5 741.7L916.6 761.9L916.6 743.8L916.7 751.8L916.8 747.8L916.8 751.8L916.9 743.8L917.0 745.8L917.0 745.8L917.1 764.0L917.2 755.9L917.2 761.9L917.3 751.8L917.4 747.8L917.4 759.9L917.5 743.8L917.6 747.8L917.6 747.8L917.7 745.8L917.8 731.6L917.9 745.8L917.9 761.9L918.0 757.9L918.1 743.8L918.1 751.8L918.2 741.7L918.3 747.8L918.3 751.8L918.4 741.7L918.5 757.9L918.5 753.9L918.6 753.9L918.7 749.8L918.7 733.7L918.8 739.7L918.9 737.7L918.9 743.8L919.0 772.0L919.1 753.9L919.2 747.8L919.2 735.7L919.3 751.8L919.4 745.8L919.4 737.7L919.5 751.8L919.6 741.7L919.6 745.8L919.7 747.8L919.8 743.8L919.8 747.8L919.9 759.9L920.0 735.7L920.0 727.6L920.1 737.7L920.2 751.8L920.2 743.8L920.3 739.7L920.4 764.0L920.5 739.7L920.5 761.9L920.6 731.6L920.7 755.9L920.7 729.6L920.8 755.9L920.9 747.8L920.9 737.7L921.0 723.6L921.1 741.7L921.1 737.7L921.2 751.8L921.3 741.7L921.3 751.8L921.4 733.7L921.5 739.7L921.6 751.8L921.6 739.7L921.7 761.9L921.8 733.7L921.8 743.8L921.9 751.8L922.0 743.8L922.0 739.7L922.1 743.8L922.2 735.7L922.2 749.8L922.3 751.8L922.4 751.8L922.4 753.9L922.5 747.8L922.6 741.7L922.6 735.7L922.7 743.8L922.8 739.7L922.9 727.6L922.9 743.8L923.0 761.9L923.1 743.8L923.1 768.0L923.2 743.8L923.3 715.5L923.3 747.8L923.4 731.6L923.5 768.0L923.5 729.6L923.6 757.9L923.7 737.7L923.7 753.9L923.8 751.8L923.9 759.9L923.9 766.0L924.0 741.7L924.1 741.7L924.2 759.9L924.2 745.8L924.3 753.9L924.4 735.7L924.4 759.9L924.5 745.8L924.6 735.7L924.6 747.8L924.7 743.8L924.8 739.7L924.8 741.7L924.9 737.7L925.0 755.9L925.0 733.7L925.1 747.8L925.2 733.7L925.2 743.8L925.3 741.7L925.4 731.6L925.5 759.9L925.5 735.7L925.6 753.9L925.7 737.7L925.7 755.9L925.8 749.8L925.9 759.9L925.9 739.7L926.0 753.9L926.1 747.8L926.1 739.7L926.2 751.8L926.3 735.7L926.3 747.8L926.4 731.6L926.5 739.7L926.6 721.5L926.6 741.7L926.7 753.9L926.8 747.8L926.8 731.6L926.9 733.7L927.0 753.9L927.0 753.9L927.1 753.9L927.2 743.8L927.2 755.9L927.3 741.7L927.4 751.8L927.4 737.7L927.5 755.9L927.6 733.7L927.6 751.8L927.7 766.0L927.8 757.9L927.9 739.7L927.9 757.9L928.0 753.9L928.1 719.5L928.1 749.8L928.2 743.8L928.3 747.8L928.3 749.8L928.4 735.7L928.5 766.0L928.5 751.8L928.6 749.8L928.7 743.8L928.7 741.7L928.8 774.1L928.9 759.9L928.9 755.9L929.0 751.8L929.1 739.7L929.2 741.7L929.2 733.7L929.3 749.8L929.4 749.8L929.4 759.9L929.5 735.7L929.6 735.7L929.6 729.6L929.7 741.7L929.8 735.7L929.8 745.8L929.9 737.7L930.0 751.8L930.0 741.7L930.1 739.7L930.2 745.8L930.2 737.7L930.3 743.8L930.4 753.9L930.5 764.0L930.5 751.8L930.6 755.9L930.7 733.7L930.7 747.8L930.8 741.7L930.9 733.7L930.9 739.7L931.0 735.7L931.1 745.8L931.1 739.7L931.2 729.6L931.3 749.8L931.3 741.7L931.4 729.6L931.5 755.9L931.6 761.9L931.6 747.8L931.7 735.7L931.8 747.8L931.8 755.9L931.9 723.6L932.0 749.8L932.0 749.8L932.1 761.9L932.2 749.8L932.2 725.6L932.3 749.8L932.4 739.7L932.4 733.7L932.5 776.1L932.6 743.8L932.6 757.9L932.7 747.8L932.8 737.7L932.9 751.8L932.9 741.7L933.0 753.9L933.1 745.8L933.1 741.7L933.2 747.8L933.3 751.8L933.3 741.7L933.4 759.9L933.5 751.8L933.5 739.7L933.6 747.8L933.7 761.9L933.7 743.8L933.8 733.7L933.9 757.9L933.9 733.7L934.0 774.1L934.1 729.6L934.2 745.8L934.2 753.9L934.3 757.9L934.4 749.8L934.4 749.8L934.5 747.8L934.6 747.8L934.6 761.9L934.7 753.9L934.8 757.9L934.8 737.7L934.9 757.9L935.0 743.8L935.0 761.9L935.1 743.8L935.2 749.8L935.3 747.8L935.3 741.7L935.4 753.9L935.5 743.8L935.5 733.7L935.6 741.7L935.7 745.8L935.7 743.8L935.8 735.7L935.9 768.0L935.9 721.5L936.0 749.8L936.1 735.7L936.1 764.0L936.2 753.9L936.3 745.8L936.3 745.8L936.4 731.6L936.5 751.8L936.6 755.9L936.6 743.8L936.7 757.9L936.8 733.7L936.8 755.9L936.9 774.1L937.0 743.8L937.0 755.9L937.1 733.7L937.2 759.9L937.2 747.8L937.3 745.8L937.4 747.8L937.4 764.0L937.5 747.8L937.6 759.9L937.6 764.0L937.7 733.7L937.8 753.9L937.9 761.9L937.9 770.0L938.0 735.7L938.1 737.7L938.1 741.7L938.2 739.7L938.3 753.9L938.3 745.8L938.4 741.7L938.5 753.9L938.5 741.7L938.6 739.7L938.7 747.8L938.7 743.8L938.8 768.0L938.9 751.8L938.9 751.8L939.0 751.8L939.1 733.7L939.2 731.6L939.2 764.0L939.3 745.8L939.4 755.9L939.4 743.8L939.5 727.6L939.6 757.9L939.6 751.8L939.7 751.8L939.8 741.7L939.8 739.7L939.9 764.0L940.0 755.9L940.0 751.8L940.1 729.6L940.2 739.7L940.3 743.8L940.3 727.6L940.4 751.8L940.5 739.7L940.5 753.9L940.6 753.9L940.7 733.7L940.7 737.7L940.8 743.8L940.9 757.9L940.9 753.9L941.0 733.7L941.1 749.8L941.1 764.0L941.2 755.9L941.3 745.8L941.3 735.7L941.4 749.8L941.5 753.9L941.6 739.7L941.6 753.9L941.7 753.9L941.8 745.8L941.8 747.8L941.9 735.7L942.0 749.8L942.0 743.8L942.1 749.8L942.2 743.8L942.2 733.7L942.3 759.9L942.4 735.7L942.4 733.7L942.5 751.8L942.6 774.1L942.6 749.8L942.7 743.8L942.8 755.9L942.9 757.9L942.9 751.8L943.0 735.7L943.1 745.8L943.1 743.8L943.2 745.8L943.3 743.8L943.3 749.8L943.4 747.8L943.5 759.9L943.5 719.5L943.6 757.9L943.7 739.7L943.7 743.8L943.8 741.7L943.9 747.8L944.0 745.8L944.0 751.8L944.1 761.9L944.2 743.8L944.2 745.8L944.3 751.8L944.4 733.7L944.4 733.7L944.5 751.8L944.6 749.8L944.6 755.9L944.7 741.7L944.8 755.9L944.8 751.8L944.9 729.6L945.0 757.9L945.0 735.7L945.1 745.8L945.2 755.9L945.3 739.7L945.3 745.8L945.4 739.7L945.5 751.8L945.5 753.9L945.6 759.9L945.7 759.9L945.7 747.8L945.8 751.8L945.9 764.0L945.9 755.9L946.0 747.8L946.1 764.0L946.1 772.0L946.2 743.8L946.3 761.9L946.3 749.8L946.4 731.6L946.5 761.9L946.6 751.8L946.6 755.9L946.7 739.7L946.8 747.8L946.8 761.9L946.9 739.7L947.0 733.7L947.0 739.7L947.1 755.9L947.2 723.6L947.2 743.8L947.3 751.8L947.4 761.9L947.4 747.8L947.5 761.9L947.6 759.9L947.6 743.8L947.7 741.7L947.8 745.8L947.9 749.8L947.9 737.7L948.0 737.7L948.1 766.0L948.1 741.7L948.2 739.7L948.3 745.8L948.3 749.8L948.4 739.7L948.5 766.0L948.5 733.7L948.6 747.8L948.7 745.8L948.7 743.8L948.8 749.8L948.9 753.9L949.0 753.9L949.0 757.9L949.1 770.0L949.2 737.7L949.2 727.6L949.3 743.8L949.4 753.9L949.4 749.8L949.5 739.7L949.6 747.8L949.6 751.8L949.7 739.7L949.8 753.9L949.8 759.9L949.9 751.8L950.0 735.7L950.0 719.5L950.1 755.9L950.2 739.7L950.3 759.9L950.3 743.8L950.4 759.9L950.5 755.9L950.5 739.7L950.6 759.9L950.7 747.8L950.7 751.8L950.8 721.5L950.9 739.7L950.9 753.9L951.0 725.6L951.1 743.8L951.1 757.9L951.2 753.9L951.3 739.7L951.3 729.6L951.4 766.0L951.5 745.8L951.6 755.9L951.6 741.7L951.7 774.1L951.8 741.7L951.8 747.8L951.9 743.8L952.0 747.8L952.0 743.8L952.1 737.7L952.2 761.9L952.2 751.8L952.3 755.9L952.4 749.8L952.4 745.8L952.5 749.8L952.6 739.7L952.6 770.0L952.7 757.9L952.8 759.9L952.9 761.9L952.9 745.8L953.0 743.8L953.1 751.8L953.1 741.7L953.2 751.8L953.3 745.8L953.3 766.0L953.4 751.8L953.5 764.0L953.5 741.7L953.6 743.8L953.7 737.7L953.7 735.7L953.8 745.8L953.9 757.9L954.0 753.9L954.0 743.8L954.1 743.8L954.2 741.7L954.2 759.9L954.3 759.9L954.4 741.7L954.4 761.9L954.5 747.8L954.6 749.8L954.6 737.7L954.7 761.9L954.8 741.7L954.8 751.8L954.9 743.8L955.0 757.9L955.0 745.8L955.1 741.7L955.2 743.8L955.3 739.7L955.3 745.8L955.4 747.8L955.5 743.8L955.5 759.9L955.6 743.8L955.7 757.9L955.7 749.8L955.8 749.8L955.9 759.9L955.9 755.9L956.0 741.7L956.1 743.8L956.1 747.8L956.2 743.8L956.3 751.8L956.3 747.8L956.4 749.8L956.5 741.7L956.6 761.9L956.6 739.7L956.7 770.0L956.8 751.8L956.8 727.6L956.9 755.9L957.0 751.8L957.0 757.9L957.1 737.7L957.2 757.9L957.2 751.8L957.3 751.8L957.4 755.9L957.4 745.8L957.5 751.8L957.6 731.6L957.7 749.8L957.7 741.7L957.8 766.0L957.9 737.7L957.9 745.8L958.0 753.9L958.1 745.8L958.1 770.0L958.2 757.9L958.3 741.7L958.3 749.8L958.4 735.7L958.5 741.7L958.5 731.6L958.6 737.7L958.7 759.9L958.7 737.7L958.8 743.8L958.9 757.9L959.0 757.9L959.0 753.9L959.1 739.7L959.2 751.8L959.2 747.8L959.3 747.8L959.4 743.8L959.4 749.8L959.5 761.9L959.6 729.6L959.6 745.8L959.7 766.0L959.8 755.9L959.8 731.6L959.9 729.6L960.0 747.8L960.0 751.8L960.1 749.8L960.2 751.8L960.3 747.8L960.3 745.8L960.4 759.9L960.5 727.6L960.5 755.9L960.6 761.9L960.7 743.8L960.7 751.8L960.8 741.7L960.9 757.9L960.9 745.8L961.0 759.9L961.1 737.7L961.1 755.9L961.2 729.6L961.3 755.9L961.3 745.8L961.4 749.8L961.5 729.6L961.6 751.8L961.6 745.8L961.7 735.7L961.8 759.9L961.8 747.8L961.9 735.7L962.0 753.9L962.0 759.9L962.1 745.8L962.2 737.7L962.2 735.7L962.3 747.8L962.4 755.9L962.4 770.0L962.5 749.8L962.6 757.9L962.7 745.8L962.7 741.7L962.8 743.8L962.9 755.9L962.9 721.5L963.0 739.7L963.1 743.8L963.1 739.7L963.2 729.6L963.3 751.8L963.3 739.7L963.4 749.8L963.5 749.8L963.5 721.5L963.6 757.9L963.7 747.8L963.7 739.7L963.8 743.8L963.9 749.8L964.0 739.7L964.0 753.9L964.1 747.8L964.2 747.8L964.2 757.9L964.3 755.9L964.4 735.7L964.4 759.9L964.5 723.6L964.6 751.8L964.6 725.6L964.7 741.7L964.8 747.8L964.8 735.7L964.9 759.9L965.0 745.8L965.0 741.7L965.1 741.7L965.2 751.8L965.3 761.9L965.3 729.6L965.4 733.7L965.5 751.8L965.5 737.7L965.6 757.9L965.7 753.9L965.7 723.6L965.8 759.9L965.9 745.8L965.9 741.7L966.0 737.7L966.1 731.6L966.1 761.9L966.2 741.7L966.3 743.8L966.3 747.8L966.4 753.9L966.5 735.7L966.6 751.8L966.6 743.8L966.7 751.8L966.8 749.8L966.8 723.6L966.9 755.9L967.0 737.7L967.0 761.9L967.1 727.6L967.2 743.8L967.2 751.8L967.3 739.7L967.4 741.7L967.4 727.6L967.5 741.7L967.6 739.7L967.7 749.8L967.7 737.7L967.8 739.7L967.9 747.8L967.9 753.9L968.0 723.6L968.1 747.8L968.1 737.7L968.2 761.9L968.3 751.8L968.3 755.9L968.4 741.7L968.5 749.8L968.5 737.7L968.6 751.8L968.7 751.8L968.7 751.8L968.8 753.9L968.9 745.8L969.0 747.8L969.0 733.7L969.1 751.8L969.2 757.9L969.2 735.7L969.3 729.6L969.4 745.8L969.4 761.9L969.5 747.8L969.6 755.9L969.6 751.8L969.7 749.8L969.8 761.9L969.8 747.8L969.9 747.8L970.0 753.9L970.0 759.9L970.1 745.8L970.2 743.8L970.3 723.6L970.3 743.8L970.4 755.9L970.5 755.9L970.5 770.0L970.6 761.9L970.7 737.7L970.7 766.0L970.8 749.8L970.9 755.9L970.9 743.8L971.0 739.7L971.1 745.8L971.1 741.7L971.2 766.0L971.3 759.9L971.4 764.0L971.4 753.9L971.5 768.0L971.6 741.7L971.6 737.7L971.7 739.7L971.8 753.9L971.8 749.8L971.9 743.8L972.0 757.9L972.0 751.8L972.1 743.8L972.2 747.8L972.2 751.8L972.3 755.9L972.4 739.7L972.4 751.8L972.5 749.8L972.6 745.8L972.7 755.9L972.7 733.7L972.8 751.8L972.9 739.7L972.9 743.8L973.0 757.9L973.1 772.0L973.1 749.8L973.2 741.7L973.3 759.9L973.3 739.7L973.4 755.9L973.5 751.8L973.5 759.9L973.6 757.9L973.7 745.8L973.7 741.7L973.8 764.0L973.9 737.7L974.0 745.8L974.0 745.8L974.1 747.8L974.2 759.9L974.2 731.6L974.3 735.7L974.4 759.9L974.4 753.9L974.5 757.9L974.6 749.8L974.6 749.8L974.7 731.6L974.8 743.8L974.8 731.6L974.9 737.7L975.0 757.9L975.0 739.7L975.1 745.8L975.2 757.9L975.3 745.8L975.3 741.7L975.4 757.9L975.5 735.7L975.5 731.6L975.6 717.5L975.7 768.0L975.7 751.8L975.8 757.9L975.9 759.9L975.9 745.8L976.0 749.8L976.1 743.8L976.1 739.7L976.2 749.8L976.3 737.7L976.4 735.7L976.4 715.5L976.5 774.1L976.6 751.8L976.6 731.6L976.7 735.7L976.8 755.9L976.8 737.7L976.9 733.7L977.0 739.7L977.0 759.9L977.1 741.7L977.2 780.1L977.2 745.8L977.3 745.8L977.4 739.7L977.4 753.9L977.5 747.8L977.6 751.8L977.7 761.9L977.7 751.8L977.8 743.8L977.9 743.8L977.9 757.9L978.0 768.0L978.1 735.7L978.1 743.8L978.2 759.9L978.3 745.8L978.3 755.9L978.4 741.7L978.5 737.7L978.5 751.8L978.6 739.7L978.7 766.0L978.7 755.9L978.8 751.8L978.9 749.8L979.0 749.8L979.0 735.7L979.1 753.9L979.2 757.9L979.2 735.7L979.3 745.8L979.4 743.8L979.4 749.8L979.5 745.8L979.6 737.7L979.6 755.9L979.7 747.8L979.8 753.9L979.8 745.8L979.9 751.8L980.0 751.8L980.0 751.8L980.1 751.8L980.2 745.8L980.3 759.9L980.3 751.8L980.4 770.0L980.5 749.8L980.5 759.9L980.6 745.8L980.7 755.9L980.7 723.6L980.8 741.7L980.9 755.9L980.9 727.6L981.0 737.7L981.1 759.9L981.1 743.8L981.2 735.7L981.3 774.1L981.4 759.9L981.4 755.9L981.5 743.8L981.6 745.8L981.6 759.9L981.7 759.9L981.8 761.9L981.8 749.8L981.9 753.9L982.0 749.8L982.0 731.6L982.1 747.8L982.2 751.8L982.2 749.8L982.3 743.8L982.4 733.7L982.4 749.8L982.5 739.7L982.6 741.7L982.7 743.8L982.7 745.8L982.8 745.8L982.9 747.8L982.9 759.9L983.0 743.8L983.1 759.9L983.1 739.7L983.2 753.9L983.3 741.7L983.3 745.8L983.4 751.8L983.5 741.7L983.5 715.5L983.6 745.8L983.7 745.8L983.7 745.8L983.8 766.0L983.9 755.9L984.0 739.7L984.0 759.9L984.1 753.9L984.2 729.6L984.2 713.5L984.3 749.8L984.4 759.9L984.4 739.7L984.5 727.6L984.6 747.8L984.6 739.7L984.7 753.9L984.8 739.7L984.8 770.0L984.9 729.6L985.0 749.8L985.1 745.8L985.1 743.8L985.2 749.8L985.3 751.8L985.3 753.9L985.4 745.8L985.5 733.7L985.5 737.7L985.6 755.9L985.7 743.8L985.7 737.7L985.8 757.9L985.9 747.8L985.9 747.8L986.0 745.8L986.1 759.9L986.1 747.8L986.2 747.8L986.3 739.7L986.4 743.8L986.4 737.7L986.5 749.8L986.6 745.8L986.6 757.9L986.7 741.7L986.8 729.6L986.8 741.7L986.9 741.7L987.0 747.8L987.0 733.7L987.1 741.7L987.2 733.7L987.2 761.9L987.3 743.8L987.4 753.9L987.4 757.9L987.5 751.8L987.6 743.8L987.7 761.9L987.7 764.0L987.8 741.7L987.9 749.8L987.9 747.8L988.0 761.9L988.1 768.0L988.1 751.8L988.2 739.7L988.3 753.9L988.3 745.8L988.4 751.8L988.5 755.9L988.5 745.8L988.6 755.9L988.7 747.8L988.7 753.9L988.8 755.9L988.9 764.0L989.0 753.9L989.0 743.8L989.1 745.8L989.2 743.8L989.2 741.7L989.3 727.6L989.4 747.8L989.4 747.8L989.5 739.7L989.6 772.0L989.6 749.8L989.7 751.8L989.8 743.8L989.8 774.1L989.9 751.8L990.0 731.6L990.1 757.9L990.1 739.7L990.2 739.7L990.3 755.9L990.3 761.9L990.4 741.7L990.5 761.9L990.5 764.0L990.6 737.7L990.7 753.9L990.7 747.8L990.8 755.9L990.9 753.9L990.9 727.6L991.0 749.8L991.1 747.8L991.1 753.9L991.2 772.0L991.3 741.7L991.4 723.6L991.4 755.9L991.5 743.8L991.6 745.8L991.6 743.8L991.7 745.8L991.8 743.8L991.8 745.8L991.9 743.8L992.0 753.9L992.0 737.7L992.1 731.6L992.2 745.8L992.2 753.9L992.3 759.9L992.4 741.7L992.4 735.7L992.5 766.0L992.6 749.8L992.7 755.9L992.7 749.8L992.8 755.9L992.9 759.9L992.9 743.8L993.0 761.9L993.1 759.9L993.1 747.8L993.2 743.8L993.3 737.7L993.3 743.8L993.4 745.8L993.5 735.7L993.5 717.5L993.6 735.7L993.7 735.7L993.7 751.8L993.8 749.8L993.9 751.8L994.0 753.9L994.0 753.9L994.1 764.0L994.2 747.8L994.2 745.8L994.3 739.7L994.4 745.8L994.4 757.9L994.5 747.8L994.6 747.8L994.6 755.9L994.7 739.7L994.8 755.9L994.8 751.8L994.9 731.6L995.0 741.7L995.1 737.7L995.1 751.8L995.2 741.7L995.3 753.9L995.3 749.8L995.4 747.8L995.5 739.7L995.5 759.9L995.6 727.6L995.7 761.9L995.7 739.7L995.8 755.9L995.9 759.9L995.9 733.7L996.0 749.8L996.1 737.7L996.1 751.8L996.2 755.9L996.3 753.9L996.4 745.8L996.4 731.6L996.5 749.8L996.6 747.8L996.6 766.0L996.7 747.8L996.8 751.8L996.8 751.8L996.9 745.8L997.0 739.7L997.0 755.9L997.1 751.8L997.2 747.8L997.2 737.7L997.3 745.8L997.4 759.9L997.4 729.6L997.5 753.9L997.6 743.8L997.7 737.7L997.7 766.0L997.8 741.7L997.9 737.7L997.9 743.8L998.0 745.8L998.1 755.9L998.1 725.6L998.2 776.1L998.3 731.6L998.3 739.7L998.4 733.7L998.5 764.0L998.5 733.7L998.6 739.7L998.7 739.7L998.8 753.9L998.8 755.9L998.9 761.9L999.0 739.7L999.0 737.7L999.1 759.9L999.2 759.9L999.2 751.8L999.3 755.9L999.4 749.8L999.4 743.8L999.5 739.7L999.6 757.9L999.6 749.8L999.7 764.0L999.8 751.8L999.8 759.9L999.9 761.9L1000.0 753.9L1000.1 757.9L1000.1 759.9L1000.2 759.9L1000.3 743.8L1000.3 759.9L1000.4 755.9L1000.5 739.7L1000.5 751.8L1000.6 755.9L1000.7 727.6L1000.7 727.6L1000.8 747.8L1000.9 751.8L1000.9 741.7L1001.0 735.7L1001.1 749.8L1001.1 737.7L1001.2 735.7L1001.3 772.0L1001.4 729.6L1001.4 761.9L1001.5 751.8L1001.6 733.7L1001.6 731.6L1001.7 755.9L1001.8 749.8L1001.8 741.7L1001.9 731.6L1002.0 739.7L1002.0 749.8L1002.1 729.6L1002.2 751.8L1002.2 749.8L1002.3 729.6L1002.4 753.9L1002.4 768.0L1002.5 753.9L1002.6 741.7L1002.7 745.8L1002.7 768.0L1002.8 755.9L1002.9 735.7L1002.9 739.7L1003.0 749.8L1003.1 753.9L1003.1 745.8L1003.2 766.0L1003.3 749.8L1003.3 741.7L1003.4 739.7L1003.5 753.9L1003.5 776.1L1003.6 749.8L1003.7 747.8L1003.8 747.8L1003.8 757.9L1003.9 753.9L1004.0 747.8L1004.0 757.9L1004.1 749.8L1004.2 770.0L1004.2 747.8L1004.3 751.8L1004.4 735.7L1004.4 735.7L1004.5 774.1L1004.6 753.9L1004.6 759.9L1004.7 751.8L1004.8 753.9L1004.8 766.0L1004.9 755.9L1005.0 753.9L1005.1 735.7L1005.1 743.8L1005.2 747.8L1005.3 757.9L1005.3 735.7L1005.4 770.0L1005.5 731.6L1005.5 735.7L1005.6 759.9L1005.7 766.0L1005.7 745.8L1005.8 743.8L1005.9 747.8L1005.9 741.7L1006.0 739.7L1006.1 764.0L1006.1 745.8L1006.2 759.9L1006.3 731.6L1006.4 739.7L1006.4 743.8L1006.5 751.8L1006.6 743.8L1006.6 772.0L1006.7 743.8L1006.8 759.9L1006.8 749.8L1006.9 749.8L1007.0 739.7L1007.0 753.9L1007.1 751.8L1007.2 753.9L1007.2 747.8L1007.3 761.9L1007.4 743.8L1007.4 755.9L1007.5 745.8L1007.6 739.7L1007.7 737.7L1007.7 757.9L1007.8 741.7L1007.9 747.8L1007.9 766.0L1008.0 759.9L1008.1 759.9L1008.1 753.9L1008.2 751.8L1008.3 747.8L1008.3 747.8L1008.4 751.8L1008.5 735.7L1008.5 741.7L1008.6 733.7L1008.7 743.8L1008.8 747.8L1008.8 745.8L1008.9 761.9L1009.0 747.8L1009.0 757.9L1009.1 725.6L1009.2 735.7L1009.2 753.9L1009.3 745.8L1009.4 741.7L1009.4 741.7L1009.5 745.8L1009.6 747.8L1009.6 733.7L1009.7 751.8L1009.8 768.0L1009.8 739.7L1009.9 737.7L1010.0 766.0L1010.1 751.8L1010.1 745.8L1010.2 755.9L1010.3 737.7L1010.3 757.9L1010.4 745.8L1010.5 735.7L1010.5 737.7L1010.6 759.9L1010.7 753.9L1010.7 761.9L1010.8 751.8L1010.9 727.6L1010.9 768.0L1011.0 751.8L1011.1 751.8L1011.1 749.8L1011.2 753.9L1011.3 743.8L1011.4 759.9L1011.4 741.7L1011.5 749.8L1011.6 743.8L1011.6 741.7L1011.7 751.8L1011.8 751.8L1011.8 739.7L1011.9 749.8L1012.0 747.8L1012.0 745.8L1012.1 755.9L1012.2 737.7L1012.2 761.9L1012.3 731.6L1012.4 743.8L1012.5 755.9L1012.5 739.7L1012.6 737.7L1012.7 749.8L1012.7 743.8L1012.8 766.0L1012.9 747.8L1012.9 727.6L1013.0 768.0L1013.1 751.8L1013.1 741.7L1013.2 753.9L1013.3 766.0L1013.3 749.8L1013.4 733.7L1013.5 737.7L1013.5 729.6L1013.6 761.9L1013.7 755.9L1013.8 733.7L1013.8 729.6L1013.9 749.8L1014.0 772.0L1014.0 745.8L1014.1 735.7L1014.2 751.8L1014.2 733.7L1014.3 770.0L1014.4 739.7L1014.4 761.9L1014.5 733.7L1014.6 747.8L1014.6 741.7L1014.7 766.0L1014.8 743.8L1014.8 759.9L1014.9 749.8L1015.0 747.8L1015.1 739.7L1015.1 749.8L1015.2 759.9L1015.3 743.8L1015.3 766.0L1015.4 759.9L1015.5 747.8L1015.5 747.8L1015.6 761.9L1015.7 759.9L1015.7 739.7L1015.8 743.8L1015.9 751.8L1015.9 737.7L1016.0 757.9L1016.1 739.7L1016.1 759.9L1016.2 735.7L1016.3 745.8L1016.4 751.8L1016.4 755.9L1016.5 759.9L1016.6 751.8L1016.6 741.7L1016.7 743.8L1016.8 749.8L1016.8 755.9L1016.9 735.7L1017.0 755.9L1017.0 753.9L1017.1 741.7L1017.2 745.8L1017.2 751.8L1017.3 753.9L1017.4 731.6L1017.5 747.8L1017.5 761.9L1017.6 753.9L1017.7 729.6L1017.7 759.9L1017.8 745.8L1017.9 772.0L1017.9 739.7L1018.0 751.8L1018.1 741.7L1018.1 737.7L1018.2 745.8L1018.3 764.0L1018.3 753.9L1018.4 749.8L1018.5 739.7L1018.5 753.9L1018.6 757.9L1018.7 755.9L1018.8 747.8L1018.8 741.7L1018.9 731.6L1019.0 745.8L1019.0 737.7L1019.1 731.6L1019.2 745.8L1019.2 733.7L1019.3 747.8L1019.4 747.8L1019.4 747.8L1019.5 757.9L1019.6 761.9L1019.6 741.7L1019.7 766.0L1019.8 747.8L1019.8 723.6L1019.9 751.8L1020.0 741.7L1020.1 751.8L1020.1 751.8L1020.2 743.8L1020.3 739.7L1020.3 755.9L1020.4 743.8L1020.5 753.9L1020.5 768.0L1020.6 749.8L1020.7 743.8L1020.7 749.8L1020.8 743.8L1020.9 743.8L1020.9 749.8L1021.0 743.8L1021.1 751.8L1021.1 727.6L1021.2 741.7L1021.3 770.0L1021.4 735.7L1021.4 737.7L1021.5 735.7L1021.6 747.8L1021.6 761.9L1021.7 741.7L1021.8 749.8L1021.8 749.8L1021.9 757.9L1022.0 719.5L1022.0 749.8L1022.1 755.9L1022.2 747.8L1022.2 735.7L1022.3 743.8L1022.4 735.7L1022.5 733.7L1022.5 733.7L1022.6 737.7L1022.7 739.7L1022.7 745.8L1022.8 743.8L1022.9 747.8L1022.9 751.8L1023.0 739.7L1023.1 761.9L1023.1 735.7L1023.2 764.0L1023.3 749.8L1023.3 749.8L1023.4 739.7L1023.5 743.8L1023.5 753.9L1023.6 735.7L1023.7 733.7L1023.8 749.8L1023.8 743.8L1023.9 731.6L1024.0 745.8L1024.0 735.7L1024.1 766.0L1024.2 759.9L1024.2 735.7L1024.3 749.8L1024.4 747.8L1024.4 749.8L1024.5 753.9L1024.6 749.8L1024.6 727.6L1024.7 723.6L1024.8 759.9L1024.8 747.8L1024.9 747.8L1025.0 757.9L1025.1 753.9L1025.1 753.9L1025.2 757.9L1025.3 739.7L1025.3 735.7L1025.4 743.8L1025.5 725.6L1025.5 727.6L1025.6 755.9L1025.7 743.8L1025.7 753.9L1025.8 745.8L1025.9 749.8L1025.9 745.8L1026.0 729.6L1026.1 737.7L1026.2 751.8L1026.2 766.0L1026.3 743.8L1026.4 751.8L1026.4 743.8L1026.5 749.8L1026.6 757.9L1026.6 757.9L1026.7 753.9L1026.8 739.7L1026.8 751.8L1026.9 721.5L1027.0 739.7L1027.0 733.7L1027.1 749.8L1027.2 749.8L1027.2 766.0L1027.3 745.8L1027.4 735.7L1027.5 761.9L1027.5 747.8L1027.6 737.7L1027.7 739.7L1027.7 741.7L1027.8 751.8L1027.9 753.9L1027.9 753.9L1028.0 759.9L1028.1 743.8L1028.1 751.8L1028.2 741.7L1028.3 735.7L1028.3 770.0L1028.4 753.9L1028.5 745.8L1028.5 747.8L1028.6 743.8L1028.7 733.7L1028.8 755.9L1028.8 747.8L1028.9 761.9L1029.0 749.8L1029.0 749.8L1029.1 770.0L1029.2 753.9L1029.2 737.7L1029.3 747.8L1029.4 749.8L1029.4 749.8L1029.5 739.7L1029.6 761.9L1029.6 747.8L1029.7 761.9L1029.8 739.7L1029.8 751.8L1029.9 753.9L1030.0 751.8L1030.1 743.8L1030.1 735.7L1030.2 739.7L1030.3 723.6L1030.3 753.9L1030.4 755.9L1030.5 745.8L1030.5 759.9L1030.6 757.9L1030.7 743.8L1030.7 735.7L1030.8 741.7L1030.9 764.0L1030.9 729.6L1031.0 739.7L1031.1 745.8L1031.2 743.8L1031.2 751.8L1031.3 753.9L1031.4 741.7L1031.4 759.9L1031.5 737.7L1031.6 747.8L1031.6 743.8L1031.7 743.8L1031.8 733.7L1031.8 770.0L1031.9 747.8L1032.0 761.9L1032.0 759.9L1032.1 727.6L1032.2 768.0L1032.2 761.9L1032.3 737.7L1032.4 745.8L1032.5 761.9L1032.5 731.6L1032.6 747.8L1032.7 727.6L1032.7 761.9L1032.8 743.8L1032.9 759.9L1032.9 757.9L1033.0 755.9L1033.1 751.8L1033.1 751.8L1033.2 753.9L1033.3 755.9L1033.3 757.9L1033.4 749.8L1033.5 753.9L1033.5 761.9L1033.6 759.9L1033.7 747.8L1033.8 755.9L1033.8 759.9L1033.9 737.7L1034.0 755.9L1034.0 739.7L1034.1 753.9L1034.2 764.0L1034.2 749.8L1034.3 753.9L1034.4 766.0L1034.4 764.0L1034.5 755.9L1034.6 739.7L1034.6 751.8L1034.7 743.8L1034.8 753.9L1034.8 755.9L1034.9 735.7L1035.0 729.6L1035.1 753.9L1035.1 739.7L1035.2 751.8L1035.3 753.9L1035.3 743.8L1035.4 745.8L1035.5 745.8L1035.5 739.7L1035.6 774.1L1035.7 733.7L1035.7 747.8L1035.8 733.7L1035.9 737.7L1035.9 747.8L1036.0 749.8L1036.1 737.7L1036.2 739.7L1036.2 759.9L1036.3 770.0L1036.4 751.8L1036.4 751.8L1036.5 764.0L1036.6 739.7L1036.6 733.7L1036.7 747.8L1036.8 751.8L1036.8 757.9L1036.9 761.9L1037.0 747.8L1037.0 768.0L1037.1 745.8L1037.2 770.0L1037.2 737.7L1037.3 753.9L1037.4 747.8L1037.5 741.7L1037.5 735.7L1037.6 764.0L1037.7 757.9L1037.7 739.7L1037.8 759.9L1037.9 753.9L1037.9 749.8L1038.0 743.8L1038.1 747.8L1038.1 747.8L1038.2 759.9L1038.3 739.7L1038.3 745.8L1038.4 731.6L1038.5 745.8L1038.5 741.7L1038.6 755.9L1038.7 745.8L1038.8 753.9L1038.8 759.9L1038.9 723.6L1039.0 731.6L1039.0 753.9L1039.1 743.8L1039.2 739.7L1039.2 755.9L1039.3 753.9L1039.4 735.7L1039.4 749.8L1039.5 747.8L1039.6 739.7L1039.6 747.8L1039.7 745.8L1039.8 751.8L1039.9 733.7L1039.9 735.7L1040.0 749.8L1040.1 739.7L1040.1 731.6L1040.2 731.6L1040.3 761.9L1040.3 745.8L1040.4 743.8L1040.5 751.8L1040.5 749.8L1040.6 747.8L1040.7 745.8L1040.7 741.7L1040.8 735.7L1040.9 735.7L1040.9 739.7L1041.0 741.7L1041.1 755.9L1041.2 747.8L1041.2 766.0L1041.3 772.0L1041.4 753.9L1041.4 747.8L1041.5 747.8L1041.6 745.8L1041.6 725.6L1041.7 739.7L1041.8 749.8L1041.8 751.8L1041.9 747.8L1042.0 747.8L1042.0 749.8L1042.1 739.7L1042.2 741.7L1042.2 751.8L1042.3 755.9L1042.4 743.8L1042.5 739.7L1042.5 745.8L1042.6 739.7L1042.7 743.8L1042.7 745.8L1042.8 751.8L1042.9 749.8L1042.9 743.8L1043.0 733.7L1043.1 747.8L1043.1 761.9L1043.2 751.8L1043.3 741.7L1043.3 743.8L1043.4 751.8L1043.5 745.8L1043.5 735.7L1043.6 753.9L1043.7 739.7L1043.8 749.8L1043.8 751.8L1043.9 731.6L1044.0 749.8L1044.0 751.8L1044.1 727.6L1044.2 751.8L1044.2 755.9L1044.3 761.9L1044.4 739.7L1044.4 741.7L1044.5 751.8L1044.6 745.8L1044.6 745.8L1044.7 737.7L1044.8 768.0L1044.9 751.8L1044.9 766.0L1045.0 757.9L1045.1 747.8L1045.1 745.8L1045.2 753.9L1045.3 759.9L1045.3 729.6L1045.4 753.9L1045.5 729.6L1045.5 727.6L1045.6 741.7L1045.7 753.9L1045.7 753.9L1045.8 759.9L1045.9 743.8L1045.9 741.7L1046.0 743.8L1046.1 745.8L1046.2 749.8L1046.2 745.8L1046.3 755.9L1046.4 745.8L1046.4 757.9L1046.5 739.7L1046.6 753.9L1046.6 729.6L1046.7 749.8L1046.8 739.7L1046.8 743.8L1046.9 751.8L1047.0 733.7L1047.0 739.7L1047.1 733.7L1047.2 749.8L1047.2 755.9L1047.3 761.9L1047.4 745.8L1047.5 759.9L1047.5 727.6L1047.6 761.9L1047.7 737.7L1047.7 737.7L1047.8 747.8L1047.9 729.6L1047.9 770.0L1048.0 745.8L1048.1 743.8L1048.1 745.8L1048.2 743.8L1048.3 751.8L1048.3 749.8L1048.4 733.7L1048.5 729.6L1048.5 768.0L1048.6 753.9L1048.7 749.8L1048.8 751.8L1048.8 768.0L1048.9 745.8L1049.0 755.9L1049.0 735.7L1049.1 737.7L1049.2 751.8L1049.2 741.7L1049.3 745.8L1049.4 749.8L1049.4 743.8L1049.5 753.9L1049.6 751.8L1049.6 741.7L1049.7 749.8L1049.8 753.9L1049.9 745.8L1049.9 761.9L1050.0 755.9L1050.1 751.8L1050.1 729.6L1050.2 741.7L1050.3 741.7L1050.3 737.7L1050.4 745.8L1050.5 731.6L1050.5 755.9L1050.6 729.6L1050.7 761.9L1050.7 753.9L1050.8 723.6L1050.9 757.9L1050.9 768.0L1051.0 745.8L1051.1 755.9L1051.2 759.9L1051.2 761.9L1051.3 753.9L1051.4 751.8L1051.4 729.6L1051.5 757.9L1051.6 739.7L1051.6 751.8L1051.7 759.9L1051.8 766.0L1051.8 737.7L1051.9 757.9L1052.0 755.9L1052.0 747.8L1052.1 723.6L1052.2 749.8L1052.2 755.9L1052.3 745.8L1052.4 745.8L1052.5 743.8L1052.5 755.9L1052.6 745.8L1052.7 737.7L1052.7 749.8L1052.8 755.9L1052.9 737.7L1052.9 745.8L1053.0 745.8L1053.1 753.9L1053.1 735.7L1053.2 741.7L1053.3 737.7L1053.3 723.6L1053.4 751.8L1053.5 753.9L1053.6 751.8L1053.6 757.9L1053.7 749.8L1053.8 747.8L1053.8 743.8L1053.9 761.9L1054.0 739.7L1054.0 751.8L1054.1 747.8L1054.2 739.7L1054.2 745.8L1054.3 755.9L1054.4 745.8L1054.4 755.9L1054.5 761.9L1054.6 731.6L1054.6 751.8L1054.7 745.8L1054.8 751.8L1054.9 745.8L1054.9 751.8L1055.0 737.7L1055.1 755.9L1055.1 735.7L1055.2 751.8L1055.3 759.9L1055.3 759.9L1055.4 745.8L1055.5 747.8L1055.5 739.7L1055.6 757.9L1055.7 733.7L1055.7 741.7L1055.8 727.6L1055.9 749.8L1055.9 753.9L1056.0 741.7L1056.1 733.7L1056.2 753.9L1056.2 755.9L1056.3 757.9L1056.4 741.7L1056.4 753.9L1056.5 745.8L1056.6 749.8L1056.6 761.9L1056.7 751.8L1056.8 751.8L1056.8 751.8L1056.9 731.6L1057.0 735.7L1057.0 743.8L1057.1 733.7L1057.2 733.7L1057.2 731.6L1057.3 739.7L1057.4 745.8L1057.5 757.9L1057.5 757.9L1057.6 743.8L1057.7 770.0L1057.7 761.9L1057.8 753.9L1057.9 745.8L1057.9 729.6L1058.0 749.8L1058.1 755.9L1058.1 751.8L1058.2 759.9L1058.3 755.9L1058.3 741.7L1058.4 761.9L1058.5 757.9L1058.6 745.8L1058.6 759.9L1058.7 743.8L1058.8 727.6L1058.8 729.6L1058.9 768.0L1059.0 741.7L1059.0 743.8L1059.1 749.8L1059.2 753.9L1059.2 749.8L1059.3 753.9L1059.4 772.0L1059.4 741.7L1059.5 739.7L1059.6 731.6L1059.6 761.9L1059.7 745.8L1059.8 739.7L1059.9 751.8L1059.9 731.6L1060.0 755.9L1060.1 753.9L1060.1 739.7L1060.2 761.9L1060.3 757.9L1060.3 745.8L1060.4 747.8L1060.5 743.8L1060.5 757.9L1060.6 747.8L1060.7 743.8L1060.7 749.8L1060.8 753.9L1060.9 747.8L1060.9 739.7L1061.0 757.9L1061.1 737.7L1061.2 749.8L1061.2 743.8L1061.3 745.8L1061.4 735.7L1061.4 741.7L1061.5 749.8L1061.6 759.9L1061.6 735.7L1061.7 735.7L1061.8 745.8L1061.8 745.8L1061.9 753.9L1062.0 741.7L1062.0 751.8L1062.1 743.8L1062.2 727.6L1062.2 727.6L1062.3 759.9L1062.4 751.8L1062.5 741.7L1062.5 747.8L1062.6 743.8L1062.7 757.9L1062.7 747.8L1062.8 727.6L1062.9 757.9L1062.9 749.8L1063.0 735.7L1063.1 749.8L1063.1 761.9L1063.2 753.9L1063.3 737.7L1063.3 749.8L1063.4 751.8L1063.5 755.9L1063.6 768.0L1063.6 761.9L1063.7 741.7L1063.8 751.8L1063.8 759.9L1063.9 721.5L1064.0 753.9L1064.0 757.9L1064.1 749.8L1064.2 761.9L1064.2 759.9L1064.3 741.7L1064.4 733.7L1064.4 733.7L1064.5 747.8L1064.6 757.9L1064.6 731.6L1064.7 747.8L1064.8 747.8L1064.9 743.8L1064.9 743.8L1065.0 741.7L1065.1 753.9L1065.1 743.8L1065.2 751.8L1065.3 751.8L1065.3 735.7L1065.4 764.0L1065.5 761.9L1065.5 741.7L1065.6 764.0L1065.7 737.7L1065.7 741.7L1065.8 755.9L1065.9 751.8L1065.9 745.8L1066.0 741.7L1066.1 751.8L1066.2 737.7L1066.2 739.7L1066.3 759.9L1066.4 741.7L1066.4 733.7L1066.5 743.8L1066.6 735.7L1066.6 739.7L1066.7 757.9L1066.8 733.7L1066.8 759.9L1066.9 755.9L1067.0 729.6L1067.0 739.7L1067.1 751.8L1067.2 739.7L1067.2 749.8L1067.3 753.9L1067.4 751.8L1067.5 751.8L1067.5 735.7L1067.6 743.8L1067.7 741.7L1067.7 719.5L1067.8 753.9L1067.9 735.7L1067.9 757.9L1068.0 747.8L1068.1 747.8L1068.1 757.9L1068.2 755.9L1068.3 743.8L1068.3 747.8L1068.4 753.9L1068.5 753.9L1068.6 743.8L1068.6 741.7L1068.7 745.8L1068.8 741.7L1068.8 753.9L1068.9 747.8L1069.0 755.9L1069.0 747.8L1069.1 749.8L1069.2 743.8L1069.2 753.9L1069.3 759.9L1069.4 764.0L1069.4 745.8L1069.5 739.7L1069.6 753.9L1069.6 759.9L1069.7 747.8L1069.8 743.8L1069.9 733.7L1069.9 739.7L1070.0 749.8L1070.1 751.8L1070.1 749.8L1070.2 757.9L1070.3 755.9L1070.3 764.0L1070.4 759.9L1070.5 751.8L1070.5 727.6L1070.6 747.8L1070.7 761.9L1070.7 729.6L1070.8 749.8L1070.9 751.8L1070.9 737.7L1071.0 749.8L1071.1 751.8L1071.2 761.9L1071.2 733.7L1071.3 735.7L1071.4 739.7L1071.4 749.8L1071.5 733.7L1071.6 747.8L1071.6 747.8L1071.7 729.6L1071.8 743.8L1071.8 757.9L1071.9 739.7L1072.0 757.9L1072.0 755.9L1072.1 745.8L1072.2 743.8L1072.3 713.5L1072.3 749.8L1072.4 747.8L1072.5 751.8L1072.5 737.7L1072.6 739.7L1072.7 729.6L1072.7 743.8L1072.8 751.8L1072.9 759.9L1072.9 737.7L1073.0 776.1L1073.1 772.0L1073.1 749.8L1073.2 737.7L1073.3 757.9L1073.3 735.7L1073.4 743.8L1073.5 737.7L1073.6 759.9L1073.6 745.8L1073.7 749.8L1073.8 745.8L1073.8 751.8L1073.9 753.9L1074.0 759.9L1074.0 743.8L1074.1 761.9L1074.2 764.0L1074.2 757.9L1074.3 749.8L1074.4 749.8L1074.4 749.8L1074.5 753.9L1074.6 747.8L1074.6 739.7L1074.7 759.9L1074.8 743.8L1074.9 745.8L1074.9 747.8L1075.0 774.1L1075.1 749.8L1075.1 745.8L1075.2 751.8L1075.3 751.8L1075.3 755.9L1075.4 745.8L1075.5 743.8L1075.5 745.8L1075.6 747.8L1075.7 751.8L1075.7 743.8L1075.8 743.8L1075.9 731.6L1075.9 717.5L1076.0 735.7L1076.1 741.7L1076.2 721.5L1076.2 759.9L1076.3 743.8L1076.4 759.9L1076.4 751.8L1076.5 764.0L1076.6 747.8L1076.6 755.9L1076.7 741.7L1076.8 768.0L1076.8 741.7L1076.9 743.8L1077.0 741.7L1077.0 739.7L1077.1 727.6L1077.2 735.7L1077.3 741.7L1077.3 739.7L1077.4 757.9L1077.5 745.8L1077.5 743.8L1077.6 747.8L1077.7 755.9L1077.7 735.7L1077.8 737.7L1077.9 737.7L1077.9 739.7L1078.0 749.8L1078.1 753.9L1078.1 745.8L1078.2 739.7L1078.3 753.9L1078.3 729.6L1078.4 737.7L1078.5 741.7L1078.6 745.8L1078.6 766.0L1078.7 759.9L1078.8 741.7L1078.8 743.8L1078.9 751.8L1079.0 741.7L1079.0 751.8L1079.1 751.8L1079.2 761.9L1079.2 735.7L1079.3 766.0L1079.4 739.7L1079.4 737.7L1079.5 755.9L1079.6 739.7L1079.6 725.6L1079.7 745.8L1079.8 751.8L1079.9 751.8L1079.9 741.7L1080.0 761.9L1080.1 755.9L1080.1 772.0L1080.2 741.7L1080.3 731.6L1080.3 739.7L1080.4 729.6L1080.5 764.0L1080.5 741.7L1080.6 733.7L1080.7 745.8L1080.7 751.8L1080.8 739.7L1080.9 745.8L1081.0 747.8L1081.0 731.6L1081.1 735.7L1081.2 749.8L1081.2 743.8L1081.3 745.8L1081.4 741.7L1081.4 741.7L1081.5 733.7L1081.6 739.7L1081.6 731.6L1081.7 757.9L1081.8 743.8L1081.8 753.9L1081.9 729.6L1082.0 753.9L1082.0 749.8L1082.1 747.8L1082.2 755.9L1082.3 743.8L1082.3 737.7L1082.4 753.9L1082.5 731.6L1082.5 733.7L1082.6 761.9L1082.7 749.8L1082.7 745.8L1082.8 743.8L1082.9 731.6L1082.9 755.9L1083.0 749.8L1083.1 749.8L1083.1 747.8L1083.2 735.7L1083.3 755.9L1083.3 747.8L1083.4 727.6L1083.5 755.9L1083.6 747.8L1083.6 729.6L1083.7 745.8L1083.8 745.8L1083.8 749.8L1083.9 743.8L1084.0 766.0L1084.0 735.7L1084.1 766.0L1084.2 739.7L1084.2 745.8L1084.3 745.8L1084.4 753.9L1084.4 741.7L1084.5 751.8L1084.6 739.7L1084.6 719.5L1084.7 751.8L1084.8 739.7L1084.9 759.9L1084.9 743.8L1085.0 753.9L1085.1 747.8L1085.1 764.0L1085.2 757.9L1085.3 745.8L1085.3 733.7L1085.4 741.7L1085.5 759.9L1085.5 749.8L1085.6 739.7L1085.7 764.0L1085.7 739.7L1085.8 768.0L1085.9 739.7L1086.0 749.8L1086.0 741.7L1086.1 731.6L1086.2 751.8L1086.2 749.8L1086.3 751.8L1086.4 761.9L1086.4 747.8L1086.5 749.8L1086.6 749.8L1086.6 741.7L1086.7 735.7L1086.8 737.7L1086.8 735.7L1086.9 737.7L1087.0 747.8L1087.0 755.9L1087.1 755.9L1087.2 741.7L1087.3 731.6L1087.3 743.8L1087.4 743.8L1087.5 749.8L1087.5 753.9L1087.6 739.7L1087.7 761.9L1087.7 729.6L1087.8 745.8L1087.9 731.6L1087.9 747.8L1088.0 764.0L1088.1 751.8L1088.1 751.8L1088.2 743.8L1088.3 755.9L1088.3 761.9L1088.4 741.7L1088.5 733.7L1088.6 735.7L1088.6 749.8L1088.7 776.1L1088.8 751.8L1088.8 737.7L1088.9 747.8L1089.0 747.8L1089.0 749.8L1089.1 755.9L1089.2 737.7L1089.2 749.8L1089.3 749.8L1089.4 764.0L1089.4 755.9L1089.5 755.9L1089.6 761.9L1089.6 747.8L1089.7 751.8L1089.8 757.9L1089.9 739.7L1089.9 751.8L1090.0 753.9L1090.1 739.7L1090.1 745.8L1090.2 733.7L1090.3 733.7L1090.3 766.0L1090.4 751.8L1090.5 745.8L1090.5 761.9L1090.6 731.6L1090.7 753.9L1090.7 743.8L1090.8 729.6L1090.9 747.8L1091.0 741.7L1091.0 745.8L1091.1 751.8L1091.2 755.9L1091.2 757.9L1091.3 741.7L1091.4 755.9L1091.4 731.6L1091.5 745.8L1091.6 749.8L1091.6 768.0L1091.7 733.7L1091.8 743.8L1091.8 733.7L1091.9 747.8L1092.0 753.9L1092.0 751.8L1092.1 768.0L1092.2 741.7L1092.3 733.7L1092.3 735.7L1092.4 751.8L1092.5 757.9L1092.5 741.7L1092.6 731.6L1092.7 739.7L1092.7 745.8L1092.8 731.6L1092.9 761.9L1092.9 755.9L1093.0 735.7L1093.1 735.7L1093.1 751.8L1093.2 743.8L1093.3 749.8L1093.3 747.8L1093.4 741.7L1093.5 759.9L1093.6 761.9L1093.6 741.7L1093.7 745.8L1093.8 764.0L1093.8 729.6L1093.9 735.7L1094.0 766.0L1094.0 764.0L1094.1 743.8L1094.2 764.0L1094.2 751.8L1094.3 761.9L1094.4 741.7L1094.4 747.8L1094.5 751.8L1094.6 749.8L1094.7 737.7L1094.7 751.8L1094.8 755.9L1094.9 737.7L1094.9 757.9L1095.0 745.8L1095.1 737.7L1095.1 749.8L1095.2 743.8L1095.3 753.9L1095.3 745.8L1095.4 755.9L1095.5 747.8L1095.5 757.9L1095.6 749.8L1095.7 743.8L1095.7 753.9L1095.8 743.8L1095.9 741.7L1096.0 757.9L1096.0 747.8L1096.1 739.7L1096.2 745.8L1096.2 749.8L1096.3 770.0L1096.4 753.9L1096.4 739.7L1096.5 729.6L1096.6 759.9L1096.6 757.9L1096.7 751.8L1096.8 755.9L1096.8 753.9L1096.9 759.9L1097.0 753.9L1097.0 747.8L1097.1 749.8L1097.2 753.9L1097.3 753.9L1097.3 743.8L1097.4 749.8L1097.5 757.9L1097.5 741.7L1097.6 745.8L1097.7 747.8L1097.7 761.9L1097.8 719.5L1097.9 745.8L1097.9 753.9L1098.0 735.7L1098.1 751.8L1098.1 749.8L1098.2 743.8L1098.3 735.7L1098.3 741.7L1098.4 725.6L1098.5 735.7L1098.6 747.8L1098.6 741.7L1098.7 729.6L1098.8 755.9L1098.8 745.8L1098.9 749.8L1099.0 747.8L1099.0 733.7L1099.1 745.8L1099.2 747.8L1099.2 761.9L1099.3 755.9L1099.4 745.8L1099.4 751.8L1099.5 735.7L1099.6 747.8L1099.7 733.7L1099.7 745.8L1099.8 755.9L1099.9 749.8L1099.9 753.9L1100.0 755.9L1100.1 749.8L1100.1 741.7L1100.2 757.9L1100.3 761.9L1100.3 721.5L1100.4 731.6L1100.5 743.8L1100.5 755.9L1100.6 747.8L1100.7 766.0L1100.7 747.8L1100.8 751.8L1100.9 741.7L1101.0 747.8L1101.0 747.8L1101.1 774.1L1101.2 761.9L1101.2 753.9L1101.3 739.7L1101.4 741.7L1101.4 759.9L1101.5 753.9L1101.6 749.8L1101.6 757.9L1101.7 741.7L1101.8 755.9L1101.8 753.9L1101.9 749.8L1102.0 739.7L1102.0 745.8L1102.1 749.8L1102.2 743.8L1102.3 755.9L1102.3 733.7L1102.4 749.8L1102.5 751.8L1102.5 725.6L1102.6 753.9L1102.7 745.8L1102.7 759.9L1102.8 761.9L1102.9 751.8L1102.9 768.0L1103.0 747.8L1103.1 743.8L1103.1 759.9L1103.2 749.8L1103.3 753.9L1103.3 747.8L1103.4 757.9L1103.5 755.9L1103.6 739.7L1103.6 725.6L1103.7 725.6L1103.8 727.6L1103.8 731.6L1103.9 733.7L1104.0 745.8L1104.0 737.7L1104.1 761.9L1104.2 761.9L1104.2 759.9L1104.3 749.8L1104.4 739.7L1104.4 735.7L1104.5 761.9L1104.6 749.8L1104.7 751.8L1104.7 764.0L1104.8 757.9L1104.9 725.6L1104.9 741.7L1105.0 759.9L1105.1 761.9L1105.1 747.8L1105.2 737.7L1105.3 739.7L1105.3 737.7L1105.4 741.7L1105.5 761.9L1105.5 757.9L1105.6 747.8L1105.7 757.9L1105.7 735.7L1105.8 747.8L1105.9 731.6L1106.0 766.0L1106.0 743.8L1106.1 735.7L1106.2 768.0L1106.2 768.0L1106.3 747.8L1106.4 743.8L1106.4 745.8L1106.5 743.8L1106.6 757.9L1106.6 743.8L1106.7 768.0L1106.8 737.7L1106.8 739.7L1106.9 745.8L1107.0 755.9L1107.0 745.8L1107.1 759.9L1107.2 751.8L1107.3 731.6L1107.3 743.8L1107.4 751.8L1107.5 755.9L1107.5 749.8L1107.6 766.0L1107.7 764.0L1107.7 753.9L1107.8 747.8L1107.9 747.8L1107.9 759.9L1108.0 776.1L1108.1 757.9L1108.1 731.6L1108.2 766.0L1108.3 745.8L1108.4 749.8L1108.4 747.8L1108.5 749.8L1108.6 747.8L1108.6 755.9L1108.7 729.6L1108.8 733.7L1108.8 751.8L1108.9 741.7L1109.0 749.8L1109.0 743.8L1109.1 731.6L1109.2 737.7L1109.2 749.8L1109.3 747.8L1109.4 749.8L1109.4 743.8L1109.5 735.7L1109.6 764.0L1109.7 764.0L1109.7 743.8L1109.8 764.0L1109.9 729.6L1109.9 741.7L1110.0 751.8L1110.1 751.8L1110.1 753.9L1110.2 745.8L1110.3 735.7L1110.3 741.7L1110.4 735.7L1110.5 753.9L1110.5 747.8L1110.6 727.6L1110.7 741.7L1110.7 745.8L1110.8 741.7L1110.9 729.6L1111.0 757.9L1111.0 741.7L1111.1 759.9L1111.2 751.8L1111.2 735.7L1111.3 747.8L1111.4 757.9L1111.4 759.9L1111.5 747.8L1111.6 751.8L1111.6 751.8L1111.7 735.7L1111.8 753.9L1111.8 751.8L1111.9 757.9L1112.0 751.8L1112.0 757.9L1112.1 747.8L1112.2 743.8L1112.3 757.9L1112.3 757.9L1112.4 755.9L1112.5 761.9L1112.5 747.8L1112.6 759.9L1112.7 764.0L1112.7 751.8L1112.8 739.7L1112.9 755.9L1112.9 761.9L1113.0 768.0L1113.1 743.8L1113.1 733.7L1113.2 753.9L1113.3 743.8L1113.4 761.9L1113.4 751.8L1113.5 741.7L1113.6 753.9L1113.6 749.8L1113.7 731.6L1113.8 743.8L1113.8 747.8L1113.9 768.0L1114.0 759.9L1114.0 753.9L1114.1 747.8L1114.2 751.8L1114.2 745.8L1114.3 725.6L1114.4 751.8L1114.4 749.8L1114.5 747.8L1114.6 753.9L1114.7 747.8L1114.7 755.9L1114.8 764.0L1114.9 751.8L1114.9 743.8L1115.0 757.9L1115.1 735.7L1115.1 741.7L1115.2 759.9L1115.3 749.8L1115.3 743.8L1115.4 749.8L1115.5 739.7L1115.5 729.6L1115.6 747.8L1115.7 745.8L1115.7 759.9L1115.8 743.8L1115.9 743.8L1116.0 761.9L1116.0 745.8L1116.1 757.9L1116.2 743.8L1116.2 753.9L1116.3 766.0L1116.4 741.7L1116.4 747.8L1116.5 759.9L1116.6 721.5L1116.6 735.7L1116.7 747.8L1116.8 741.7L1116.8 737.7L1116.9 745.8L1117.0 737.7L1117.0 759.9L1117.1 729.6L1117.2 741.7L1117.3 745.8L1117.3 735.7L1117.4 749.8L1117.5 745.8L1117.5 745.8L1117.6 743.8L1117.7 759.9L1117.7 739.7L1117.8 737.7L1117.9 766.0L1117.9 751.8L1118.0 743.8L1118.1 764.0L1118.1 745.8L1118.2 737.7L1118.3 739.7L1118.4 751.8L1118.4 759.9L1118.5 764.0L1118.6 755.9L1118.6 749.8L1118.7 757.9L1118.8 751.8L1118.8 747.8L1118.9 745.8L1119.0 753.9L1119.0 753.9L1119.1 731.6L1119.2 743.8L1119.2 753.9L1119.3 739.7L1119.4 733.7L1119.4 747.8L1119.5 745.8L1119.6 733.7L1119.7 729.6L1119.7 751.8L1119.8 757.9L1119.9 755.9L1119.9 749.8L1120.0 766.0L1120.1 741.7L1120.1 743.8L1120.2 743.8L1120.3 739.7L1120.3 735.7L1120.4 737.7L1120.5 733.7L1120.5 749.8L1120.6 743.8L1120.7 755.9L1120.7 755.9L1120.8 747.8L1120.9 747.8L1121.0 761.9L1121.0 721.5L1121.1 735.7L1121.2 733.7L1121.2 731.6L1121.3 749.8L1121.4 751.8L1121.4 766.0L1121.5 745.8L1121.6 739.7L1121.6 745.8L1121.7 770.0L1121.8 749.8L1121.8 753.9L1121.9 753.9L1122.0 743.8L1122.1 749.8L1122.1 743.8L1122.2 761.9L1122.3 764.0L1122.3 741.7L1122.4 733.7L1122.5 737.7L1122.5 759.9L1122.6 747.8L1122.7 751.8L1122.7 749.8L1122.8 733.7L1122.9 753.9L1122.9 733.7L1123.0 737.7L1123.1 755.9L1123.1 739.7L1123.2 723.6L1123.3 737.7L1123.4 761.9L1123.4 757.9L1123.5 749.8L1123.6 753.9L1123.6 733.7L1123.7 764.0L1123.8 739.7L1123.8 735.7L1123.9 743.8L1124.0 761.9L1124.0 727.6L1124.1 757.9L1124.2 757.9L1124.2 757.9L1124.3 733.7L1124.4 753.9L1124.4 743.8L1124.5 759.9L1124.6 743.8L1124.7 755.9L1124.7 757.9L1124.8 749.8L1124.9 749.8L1124.9 739.7L1125.0 749.8L1125.1 759.9L1125.1 741.7L1125.2 743.8L1125.3 745.8L1125.3 731.6L1125.4 753.9L1125.5 719.5L1125.5 737.7L1125.6 737.7L1125.7 735.7L1125.7 741.7L1125.8 751.8L1125.9 745.8L1126.0 741.7L1126.0 761.9L1126.1 764.0L1126.2 749.8L1126.2 751.8L1126.3 727.6L1126.4 737.7L1126.4 753.9L1126.5 737.7L1126.6 764.0L1126.6 759.9L1126.7 747.8L1126.8 739.7L1126.8 753.9L1126.9 751.8L1127.0 751.8L1127.1 753.9L1127.1 766.0L1127.2 743.8L1127.3 745.8L1127.3 733.7L1127.4 759.9L1127.5 759.9L1127.5 717.5L1127.6 737.7L1127.7 751.8L1127.7 757.9L1127.8 757.9L1127.9 737.7L1127.9 759.9L1128.0 743.8L1128.1 739.7L1128.1 755.9L1128.2 757.9L1128.3 743.8L1128.4 755.9L1128.4 749.8L1128.5 751.8L1128.6 747.8L1128.6 731.6L1128.7 772.0L1128.8 747.8L1128.8 751.8L1128.9 741.7L1129.0 741.7L1129.0 737.7L1129.1 743.8L1129.2 749.8L1129.2 729.6L1129.3 737.7L1129.4 749.8L1129.4 747.8L1129.5 751.8L1129.6 739.7L1129.7 729.6L1129.7 753.9L1129.8 751.8L1129.9 751.8L1129.9 745.8L1130.0 755.9L1130.1 757.9L1130.1 735.7L1130.2 766.0L1130.3 766.0L1130.3 733.7L1130.4 753.9L1130.5 753.9L1130.5 761.9L1130.6 755.9L1130.7 749.8L1130.7 723.6L1130.8 759.9L1130.9 729.6L1131.0 749.8L1131.0 755.9L1131.1 759.9L1131.2 739.7L1131.2 727.6L1131.3 755.9L1131.4 749.8L1131.4 739.7L1131.5 761.9L1131.6 745.8L1131.6 741.7L1131.7 735.7L1131.8 743.8L1131.8 753.9L1131.9 761.9L1132.0 753.9L1132.1 766.0L1132.1 747.8L1132.2 739.7L1132.3 743.8L1132.3 745.8L1132.4 747.8L1132.5 729.6L1132.5 761.9L1132.6 737.7L1132.7 761.9L1132.7 749.8L1132.8 733.7L1132.9 759.9L1132.9 757.9L1133.0 745.8L1133.1 741.7L1133.1 735.7L1133.2 749.8L1133.3 725.6L1133.4 743.8L1133.4 757.9L1133.5 739.7L1133.6 729.6L1133.6 759.9L1133.7 741.7L1133.8 735.7L1133.8 745.8L1133.9 755.9L1134.0 727.6L1134.0 749.8L1134.1 751.8L1134.2 753.9L1134.2 745.8L1134.3 751.8L1134.4 747.8L1134.4 759.9L1134.5 757.9L1134.6 739.7L1134.7 741.7L1134.7 735.7L1134.8 739.7L1134.9 741.7L1134.9 759.9L1135.0 749.8L1135.1 735.7L1135.1 749.8L1135.2 745.8L1135.3 717.5L1135.3 747.8L1135.4 745.8L1135.5 741.7L1135.5 764.0L1135.6 733.7L1135.7 739.7L1135.8 723.6L1135.8 735.7L1135.9 731.6L1136.0 733.7L1136.0 757.9L1136.1 757.9L1136.2 751.8L1136.2 749.8L1136.3 764.0L1136.4 733.7L1136.4 745.8L1136.5 739.7L1136.6 747.8L1136.6 757.9L1136.7 749.8L1136.8 766.0L1136.8 751.8L1136.9 741.7L1137.0 759.9L1137.1 741.7L1137.1 761.9L1137.2 743.8L1137.3 757.9L1137.3 743.8L1137.4 727.6L1137.5 753.9L1137.5 747.8L1137.6 741.7L1137.7 755.9L1137.7 749.8L1137.8 749.8L1137.9 739.7L1137.9 747.8L1138.0 757.9L1138.1 761.9L1138.1 747.8L1138.2 761.9L1138.3 751.8L1138.4 755.9L1138.4 749.8L1138.5 766.0L1138.6 735.7L1138.6 766.0L1138.7 737.7L1138.8 743.8L1138.8 741.7L1138.9 759.9L1139.0 759.9L1139.0 737.7L1139.1 768.0L1139.2 757.9L1139.2 725.6L1139.3 751.8L1139.4 749.8L1139.4 747.8L1139.5 735.7L1139.6 757.9L1139.7 749.8L1139.7 743.8L1139.8 727.6L1139.9 755.9L1139.9 751.8L1140.0 731.6L1140.1 757.9L1140.1 749.8L1140.2 753.9L1140.3 747.8L1140.3 747.8L1140.4 753.9L1140.5 743.8L1140.5 725.6L1140.6 749.8L1140.7 723.6L1140.8 737.7L1140.8 741.7L1140.9 743.8L1141.0 749.8L1141.0 747.8L1141.1 739.7L1141.2 761.9L1141.2 729.6L1141.3 747.8L1141.4 772.0L1141.4 749.8L1141.5 747.8L1141.6 755.9L1141.6 759.9L1141.7 766.0L1141.8 745.8L1141.8 739.7L1141.9 751.8L1142.0 745.8L1142.1 741.7L1142.1 764.0L1142.2 741.7L1142.3 743.8L1142.3 741.7L1142.4 749.8L1142.5 751.8L1142.5 735.7L1142.6 739.7L1142.7 764.0L1142.7 743.8L1142.8 735.7L1142.9 731.6L1142.9 766.0L1143.0 751.8L1143.1 743.8L1143.1 755.9L1143.2 766.0L1143.3 735.7L1143.4 759.9L1143.4 747.8L1143.5 741.7L1143.6 753.9L1143.6 745.8L1143.7 772.0L1143.8 757.9L1143.8 766.0L1143.9 761.9L1144.0 749.8L1144.0 743.8L1144.1 747.8L1144.2 735.7L1144.2 749.8L1144.3 741.7L1144.4 747.8L1144.4 764.0L1144.5 761.9L1144.6 741.7L1144.7 733.7L1144.7 741.7L1144.8 733.7L1144.9 747.8L1144.9 739.7L1145.0 751.8L1145.1 747.8L1145.1 733.7L1145.2 743.8L1145.3 774.1L1145.3 757.9L1145.4 741.7L1145.5 743.8L1145.5 739.7L1145.6 737.7L1145.7 747.8L1145.8 753.9L1145.8 770.0L1145.9 764.0L1146.0 749.8L1146.0 753.9L1146.1 737.7L1146.2 768.0L1146.2 733.7L1146.3 764.0L1146.4 751.8L1146.4 749.8L1146.5 755.9L1146.6 737.7L1146.6 757.9L1146.7 751.8L1146.8 747.8L1146.8 745.8L1146.9 753.9L1147.0 768.0L1147.1 735.7L1147.1 745.8L1147.2 737.7L1147.3 741.7L1147.3 751.8L1147.4 757.9L1147.5 745.8L1147.5 739.7L1147.6 751.8L1147.7 729.6L1147.7 753.9L1147.8 735.7L1147.9 749.8L1147.9 768.0L1148.0 737.7L1148.1 725.6L1148.1 745.8L1148.2 749.8L1148.3 759.9L1148.4 747.8L1148.4 743.8L1148.5 741.7L1148.6 743.8L1148.6 739.7L1148.7 755.9L1148.8 727.6L1148.8 751.8L1148.9 749.8L1149.0 759.9L1149.0 729.6L1149.1 749.8L1149.2 749.8L1149.2 757.9L1149.3 733.7L1149.4 741.7L1149.5 753.9L1149.5 747.8L1149.6 745.8L1149.7 719.5L1149.7 747.8L1149.8 753.9L1149.9 737.7L1149.9 751.8L1150.0 745.8L1150.1 739.7L1150.1 745.8L1150.2 761.9L1150.3 739.7L1150.3 759.9L1150.4 743.8L1150.5 757.9L1150.5 735.7L1150.6 749.8L1150.7 751.8L1150.8 757.9L1150.8 757.9L1150.9 747.8L1151.0 731.6L1151.0 751.8L1151.1 741.7L1151.2 743.8L1151.2 751.8L1151.3 743.8L1151.4 735.7L1151.4 743.8L1151.5 759.9L1151.6 733.7L1151.6 745.8L1151.7 764.0L1151.8 745.8L1151.8 735.7L1151.9 741.7L1152.0 729.6L1152.1 764.0L1152.1 753.9L1152.2 745.8L1152.3 745.8L1152.3 739.7L1152.4 735.7L1152.5 733.7L1152.5 759.9L1152.6 749.8L1152.7 757.9L1152.7 753.9L1152.8 731.6L1152.9 764.0L1152.9 739.7L1153.0 745.8L1153.1 755.9L1153.1 755.9L1153.2 743.8L1153.3 755.9L1153.4 737.7L1153.4 759.9L1153.5 764.0L1153.6 751.8L1153.6 757.9L1153.7 735.7L1153.8 753.9L1153.8 745.8L1153.9 745.8L1154.0 759.9L1154.0 757.9L1154.1 743.8L1154.2 741.7L1154.2 731.6L1154.3 751.8L1154.4 751.8L1154.5 737.7L1154.5 735.7L1154.6 733.7L1154.7 759.9L1154.7 745.8L1154.8 743.8L1154.9 751.8L1154.9 751.8L1155.0 759.9L1155.1 743.8L1155.1 745.8L1155.2 741.7L1155.3 747.8L1155.3 751.8L1155.4 735.7L1155.5 745.8L1155.5 747.8L1155.6 741.7L1155.7 768.0L1155.8 745.8L1155.8 741.7L1155.9 727.6L1156.0 739.7L1156.0 753.9L1156.1 731.6L1156.2 747.8L1156.2 735.7L1156.3 727.6L1156.4 753.9L1156.4 749.8L1156.5 751.8L1156.6 741.7L1156.6 737.7L1156.7 747.8L1156.8 751.8L1156.8 768.0L1156.9 735.7L1157.0 747.8L1157.1 745.8L1157.1 747.8L1157.2 759.9L1157.3 743.8L1157.3 776.1L1157.4 733.7L1157.5 764.0L1157.5 772.0L1157.6 751.8L1157.7 743.8L1157.7 751.8L1157.8 739.7L1157.9 751.8L1157.9 737.7L1158.0 749.8L1158.1 749.8L1158.1 749.8L1158.2 757.9L1158.3 751.8L1158.4 745.8L1158.4 741.7L1158.5 751.8L1158.6 753.9L1158.6 739.7L1158.7 747.8L1158.8 741.7L1158.8 755.9L1158.9 735.7L1159.0 733.7L1159.0 764.0L1159.1 733.7L1159.2 745.8L1159.2 768.0L1159.3 764.0L1159.4 743.8L1159.5 755.9L1159.5 749.8L1159.6 747.8L1159.7 749.8L1159.7 757.9L1159.8 751.8L1159.9 717.5L1159.9 719.5L1160.0 749.8L1160.1 729.6L1160.1 745.8L1160.2 743.8L1160.3 741.7L1160.3 729.6L1160.4 753.9L1160.5 735.7L1160.5 739.7L1160.6 735.7L1160.7 743.8L1160.8 737.7L1160.8 739.7L1160.9 737.7L1161.0 741.7L1161.0 741.7L1161.1 757.9L1161.2 747.8L1161.2 753.9L1161.3 727.6L1161.4 766.0L1161.4 757.9L1161.5 764.0L1161.6 751.8L1161.6 749.8L1161.7 751.8L1161.8 741.7L1161.8 727.6L1161.9 751.8L1162.0 766.0L1162.1 753.9L1162.1 731.6L1162.2 766.0L1162.3 753.9L1162.3 751.8L1162.4 741.7L1162.5 743.8L1162.5 753.9L1162.6 741.7L1162.7 764.0L1162.7 739.7L1162.8 749.8L1162.9 743.8L1162.9 751.8L1163.0 741.7L1163.1 766.0L1163.2 731.6L1163.2 747.8L1163.3 751.8L1163.4 747.8L1163.4 741.7L1163.5 743.8L1163.6 743.8L1163.6 745.8L1163.7 739.7L1163.8 757.9L1163.8 739.7L1163.9 753.9L1164.0 768.0L1164.0 753.9L1164.1 743.8L1164.2 747.8L1164.2 747.8L1164.3 733.7L1164.4 751.8L1164.5 749.8L1164.5 733.7L1164.6 745.8L1164.7 759.9L1164.7 766.0L1164.8 749.8L1164.9 727.6L1164.9 743.8L1165.0 745.8L1165.1 759.9L1165.1 761.9L1165.2 749.8L1165.3 751.8L1165.3 733.7L1165.4 737.7L1165.5 727.6L1165.5 753.9L1165.6 729.6L1165.7 739.7L1165.8 755.9L1165.8 739.7L1165.9 764.0L1166.0 772.0L1166.0 739.7L1166.1 751.8L1166.2 749.8L1166.2 759.9L1166.3 759.9L1166.4 723.6L1166.4 766.0L1166.5 749.8L1166.6 739.7L1166.6 743.8L1166.7 749.8L1166.8 729.6L1166.8 733.7L1166.9 764.0L1167.0 747.8L1167.1 741.7L1167.1 753.9L1167.2 743.8L1167.3 757.9L1167.3 757.9L1167.4 759.9L1167.5 731.6L1167.5 757.9L1167.6 735.7L1167.7 741.7L1167.7 759.9L1167.8 745.8L1167.9 747.8L1167.9 745.8L1168.0 749.8L1168.1 735.7L1168.2 735.7L1168.2 745.8L1168.3 745.8L1168.4 759.9L1168.4 768.0L1168.5 751.8L1168.6 743.8L1168.6 751.8L1168.7 743.8L1168.8 759.9L1168.8 747.8L1168.9 743.8L1169.0 727.6L1169.0 755.9L1169.1 761.9L1169.2 764.0L1169.2 774.1L1169.3 741.7L1169.4 753.9L1169.5 751.8L1169.5 733.7L1169.6 753.9L1169.7 739.7L1169.7 755.9L1169.8 768.0L1169.9 757.9L1169.9 759.9L1170.0 751.8L1170.1 733.7L1170.1 735.7L1170.2 733.7L1170.3 759.9L1170.3 737.7L1170.4 741.7L1170.5 741.7L1170.5 751.8L1170.6 753.9L1170.7 757.9L1170.8 751.8L1170.8 749.8L1170.9 757.9L1171.0 747.8L1171.0 737.7L1171.1 741.7L1171.2 753.9L1171.2 747.8L1171.3 755.9L1171.4 759.9L1171.4 759.9L1171.5 733.7L1171.6 743.8L1171.6 755.9L1171.7 735.7L1171.8 749.8L1171.8 737.7L1171.9 753.9L1172.0 745.8L1172.1 743.8L1172.1 735.7L1172.2 741.7L1172.3 741.7L1172.3 764.0L1172.4 743.8L1172.5 759.9L1172.5 753.9L1172.6 751.8L1172.7 753.9L1172.7 743.8L1172.8 745.8L1172.9 745.8L1172.9 761.9L1173.0 739.7L1173.1 745.8L1173.2 747.8L1173.2 759.9L1173.3 745.8L1173.4 753.9L1173.4 735.7L1173.5 749.8L1173.6 755.9L1173.6 741.7L1173.7 749.8L1173.8 739.7L1173.8 768.0L1173.9 739.7L1174.0 749.8L1174.0 733.7L1174.1 747.8L1174.2 751.8L1174.2 733.7L1174.3 723.6L1174.4 753.9L1174.5 768.0L1174.5 745.8L1174.6 747.8L1174.7 764.0L1174.7 743.8L1174.8 749.8L1174.9 725.6L1174.9 733.7L1175.0 749.8L1175.1 739.7L1175.1 745.8L1175.2 759.9L1175.3 739.7L1175.3 741.7L1175.4 731.6L1175.5 747.8L1175.5 766.0L1175.6 743.8L1175.7 735.7L1175.8 739.7L1175.8 749.8L1175.9 737.7L1176.0 727.6L1176.0 749.8L1176.1 719.5L1176.2 743.8L1176.2 741.7L1176.3 755.9L1176.4 737.7L1176.4 745.8L1176.5 759.9L1176.6 757.9L1176.6 745.8L1176.7 751.8L1176.8 731.6L1176.9 751.8L1176.9 743.8L1177.0 741.7L1177.1 747.8L1177.1 733.7L1177.2 749.8L1177.3 743.8L1177.3 747.8L1177.4 766.0L1177.5 751.8L1177.5 743.8L1177.6 735.7L1177.7 745.8L1177.7 755.9L1177.8 755.9L1177.9 735.7L1177.9 766.0L1178.0 747.8L1178.1 733.7L1178.2 743.8L1178.2 743.8L1178.3 757.9L1178.4 759.9L1178.4 735.7L1178.5 745.8L1178.6 764.0L1178.6 755.9L1178.7 739.7L1178.8 745.8L1178.8 764.0L1178.9 755.9L1179.0 772.0L1179.0 741.7L1179.1 764.0L1179.2 741.7L1179.2 751.8L1179.3 719.5L1179.4 733.7L1179.5 755.9L1179.5 753.9L1179.6 757.9L1179.7 759.9L1179.7 759.9L1179.8 751.8L1179.9 751.8L1179.9 751.8L1180.0 761.9L1180.1 741.7L1180.1 772.0L1180.2 753.9L1180.3 745.8L1180.3 759.9L1180.4 743.8L1180.5 745.8L1180.5 761.9L1180.6 759.9L1180.7 743.8L1180.8 739.7L1180.8 755.9L1180.9 733.7L1181.0 741.7L1181.0 731.6L1181.1 731.6L1181.2 751.8L1181.2 741.7L1181.3 747.8L1181.4 768.0L1181.4 759.9L1181.5 753.9L1181.6 737.7L1181.6 755.9L1181.7 749.8L1181.8 753.9L1181.9 725.6L1181.9 739.7L1182.0 757.9L1182.1 770.0L1182.1 739.7L1182.2 727.6L1182.3 753.9L1182.3 747.8L1182.4 747.8L1182.5 753.9L1182.5 743.8L1182.6 747.8L1182.7 764.0L1182.7 739.7L1182.8 731.6L1182.9 761.9L1182.9 761.9L1183.0 749.8L1183.1 733.7L1183.2 739.7L1183.2 757.9L1183.3 755.9L1183.4 751.8L1183.4 751.8L1183.5 731.6L1183.6 753.9L1183.6 770.0L1183.7 733.7L1183.8 753.9L1183.8 764.0L1183.9 739.7L1184.0 749.8L1184.0 747.8L1184.1 751.8L1184.2 749.8L1184.2 743.8L1184.3 747.8L1184.4 751.8L1184.5 745.8L1184.5 733.7L1184.6 739.7L1184.7 731.6L1184.7 751.8L1184.8 751.8L1184.9 735.7L1184.9 755.9L1185.0 766.0" fill="none" stroke="#0000ff" stroke-width="1.95" stroke-linejoin="round"/>
<line x1="911.07" y1="809.00" x2="911.07" y2="815.94" stroke="#262626" stroke-width="1.74"/>
<text x="908.91" y="832.00" font-size="10.11" textLength="6.12" lengthAdjust="spacingAndGlyphs" fill="#0d0d0d">0</text>
<line x1="979.57" y1="809.00" x2="979.57" y2="815.94" stroke="#262626" stroke-width="1.74"/>
<text x="967.02" y="832.00" font-size="10.11" textLength="24.50" lengthAdjust="spacingAndGlyphs" fill="#0d0d0d">1000</text>
<line x1="1048.07" y1="809.00" x2="1048.07" y2="815.94" stroke="#262626" stroke-width="1.74"/>
<text x="1035.46" y="832.00" font-size="10.11" textLength="24.62" lengthAdjust="spacingAndGlyphs" fill="#0d0d0d">2000</text>
<line x1="1116.57" y1="809.00" x2="1116.57" y2="815.94" stroke="#262626" stroke-width="1.74"/>
<text x="1104.02" y="832.00" font-size="10.11" textLength="24.50" lengthAdjust="spacingAndGlyphs" fill="#0d0d0d">3000</text>
<line x1="1185.07" y1="809.00" x2="1185.07" y2="815.94" stroke="#262626" stroke-width="1.74"/>
<text x="1172.52" y="832.00" font-size="10.11" textLength="24.50" lengthAdjust="spacingAndGlyphs" fill="#0d0d0d">4000</text>
<line x1="904.13" y1="786.17" x2="911.07" y2="786.17" stroke="#262626" stroke-width="1.74"/>
<text x="876.70" y="790.27" font-size="10.11" textLength="18.50" lengthAdjust="spacingAndGlyphs" fill="#0d0d0d">740</text>
<line x1="904.13" y1="745.77" x2="911.07" y2="745.77" stroke="#262626" stroke-width="1.74"/>
<text x="876.70" y="749.87" font-size="10.11" textLength="18.50" lengthAdjust="spacingAndGlyphs" fill="#0d0d0d">760</text>
<line x1="904.13" y1="705.37" x2="911.07" y2="705.37" stroke="#262626" stroke-width="1.74"/>
<text x="876.70" y="709.47" font-size="10.11" textLength="18.50" lengthAdjust="spacingAndGlyphs" fill="#0d0d0d">780</text>
<rect x="911.07" y="689.00" width="274.13" height="120.00" fill="none" stroke="#262626" stroke-width="1.74"/>
<text x="1046.06" y="849.80" font-size="10.11" textLength="5.88" lengthAdjust="spacingAndGlyphs" fill="#0d0d0d">Y</text>
<text x="-16.38" y="0.00" font-size="10.11" textLength="32.75" lengthAdjust="spacingAndGlyphs" fill="#0d0d0d" transform="translate(866.00 750.50) rotate(-90)">counts</text>
<text x="-19.38" y="0.00" font-size="10.83" textLength="38.75" lengthAdjust="spacingAndGlyphs" fill="#0d0d0d" transform="translate(1194.00 747.20) rotate(90)">cut in y</text>
<rect x="1108.6" y="691.6" width="73.8" height="16.4" rx="2.4" fill="#fff" fill-opacity="0.8" stroke="#ccc" stroke-width="1.1"/>
<line x1="1111.60" y1="699.60" x2="1133.60" y2="699.60" stroke="#0000ff" stroke-width="1.95"/>
<text x="1138.20" y="703.00" font-size="10.11" textLength="38.50" lengthAdjust="spacingAndGlyphs" fill="#0d0d0d">x=1053</text>
<rect x="1" y="849" width="1243" height="20" fill="#ebebeb"/>
<text x="6.40" y="864.00" font-size="10.83" textLength="172.00" lengthAdjust="spacingAndGlyphs" fill="#0d0d0d">powered by QC: www.eso.org/HC</text>
<text x="935.45" y="864.00" font-size="10.83" textLength="302.75" lengthAdjust="spacingAndGlyphs" fill="#0d0d0d">created by qc_rawdisp.py v1.2.3 on 2025-12-12T09:32:23</text>
</svg>
</body></html>
